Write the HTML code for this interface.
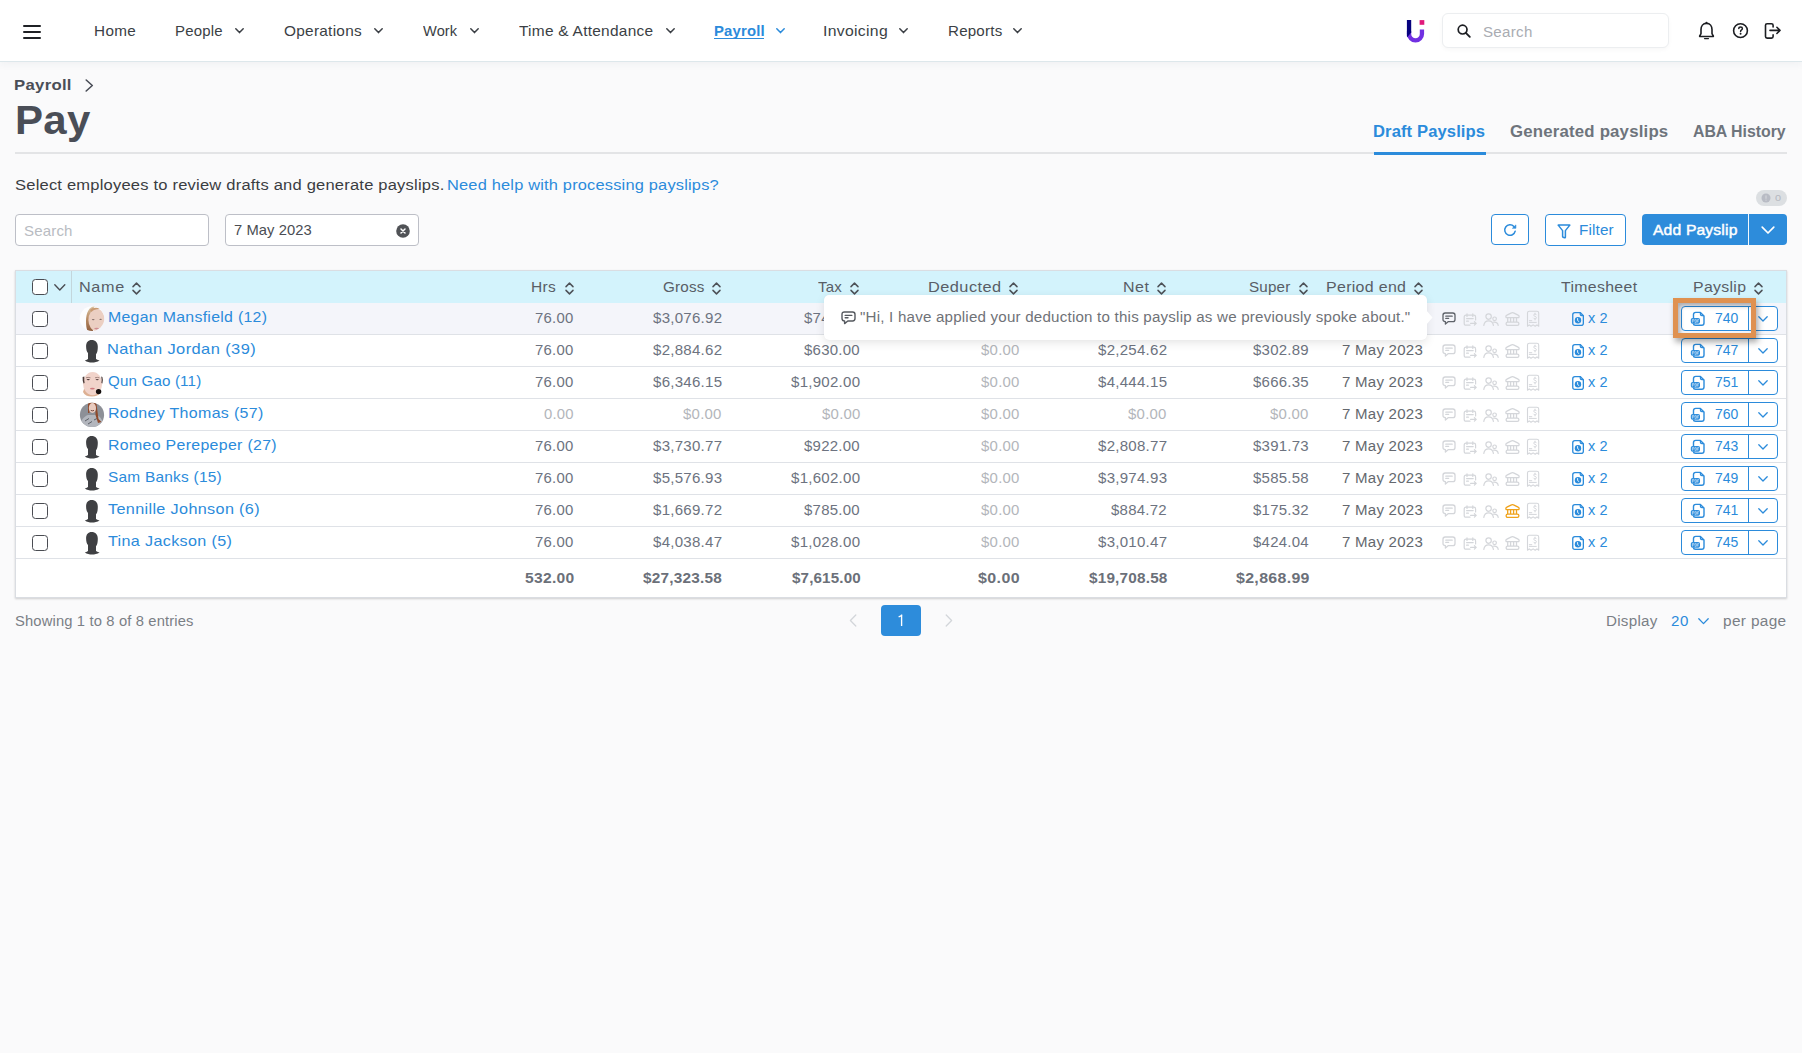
<!DOCTYPE html>
<html><head><meta charset="utf-8"><title>Pay</title>
<style>
*{box-sizing:border-box}
html,body{margin:0;padding:0}
body{width:1802px;height:1053px;overflow:hidden;position:relative;background:#fafafb;font-family:"Liberation Sans", sans-serif}
.t{position:absolute;white-space:nowrap;display:block}
.a{position:absolute}
svg{position:absolute;overflow:visible}
</style></head><body>
<div class="a" style="left:0;top:0;width:1802px;height:62px;background:#fff;border-bottom:1px solid #dde7eb;box-shadow:0 2px 8px rgba(40,60,80,0.05)"></div>
<div class="a" style="left:23px;top:25px;width:18px;height:2.2px;background:#1f2125;border-radius:2px"></div>
<div class="a" style="left:23px;top:31px;width:18px;height:2.2px;background:#1f2125;border-radius:2px"></div>
<div class="a" style="left:23px;top:37px;width:18px;height:2.2px;background:#1f2125;border-radius:2px"></div>
<svg style="left:235.0px;top:27.5px" width="9" height="6" viewBox="0 0 9 6"><path d="M0.8 0.8 L4.5 4.6 L8.2 0.8" fill="none" stroke="#3b3f45" stroke-width="1.5" stroke-linecap="round" stroke-linejoin="round"/></svg>
<svg style="left:374.0px;top:27.5px" width="9" height="6" viewBox="0 0 9 6"><path d="M0.8 0.8 L4.5 4.6 L8.2 0.8" fill="none" stroke="#3b3f45" stroke-width="1.5" stroke-linecap="round" stroke-linejoin="round"/></svg>
<svg style="left:470.0px;top:27.5px" width="9" height="6" viewBox="0 0 9 6"><path d="M0.8 0.8 L4.5 4.6 L8.2 0.8" fill="none" stroke="#3b3f45" stroke-width="1.5" stroke-linecap="round" stroke-linejoin="round"/></svg>
<svg style="left:665.7px;top:27.5px" width="9" height="6" viewBox="0 0 9 6"><path d="M0.8 0.8 L4.5 4.6 L8.2 0.8" fill="none" stroke="#3b3f45" stroke-width="1.5" stroke-linecap="round" stroke-linejoin="round"/></svg>
<div class="a" style="left:714px;top:38px;width:50px;height:1.4px;background:#2b8bdb"></div>
<svg style="left:775.5px;top:27.5px" width="9" height="6" viewBox="0 0 9 6"><path d="M0.8 0.8 L4.5 4.6 L8.2 0.8" fill="none" stroke="#2b8bdb" stroke-width="1.5" stroke-linecap="round" stroke-linejoin="round"/></svg>
<svg style="left:899.0px;top:27.5px" width="9" height="6" viewBox="0 0 9 6"><path d="M0.8 0.8 L4.5 4.6 L8.2 0.8" fill="none" stroke="#3b3f45" stroke-width="1.5" stroke-linecap="round" stroke-linejoin="round"/></svg>
<svg style="left:1013.0px;top:27.5px" width="9" height="6" viewBox="0 0 9 6"><path d="M0.8 0.8 L4.5 4.6 L8.2 0.8" fill="none" stroke="#3b3f45" stroke-width="1.5" stroke-linecap="round" stroke-linejoin="round"/></svg>
<svg style="left:1398px;top:14px" width="34" height="34" viewBox="0 0 34 34">
<path d="M11.05 17 L11.05 19.9 A6.45 6.45 0 0 0 23.95 19.9 L23.95 15.5" fill="none" stroke="#7130e2" stroke-width="4.3"/>
<path d="M8.9 6.1 L13.2 6.1 L13.2 18.6 L9.2 23.2 L8.9 22 Z" fill="#06027e"/>
<rect x="21.6" y="6.1" width="4.7" height="4.7" fill="#e01a7b"/>
</svg>
<div class="a" style="left:1442px;top:13px;width:227px;height:35px;background:#fff;border:1px solid #eceef0;border-radius:6px;box-shadow:0 2px 4px rgba(0,0,0,0.03)"></div>
<svg style="left:1457px;top:24px" width="14" height="14" viewBox="0 0 14 14"><circle cx="5.6" cy="5.6" r="4.4" fill="none" stroke="#1c1e22" stroke-width="1.7"/><path d="M8.8 8.8 L12.8 12.8" stroke="#1c1e22" stroke-width="1.9" stroke-linecap="round"/></svg>
<svg style="left:1692px;top:16px" width="96" height="30" viewBox="0 0 96 30">
<path d="M14.5 7.4 C10.9 7.4 9 10.2 9 13.6 L9 17.6 L7.8 19.8 Q7.3 20.5 8.2 20.5 L20.8 20.5 Q21.7 20.5 21.2 19.8 L20 17.6 L20 13.6 C20 10.2 18.1 7.4 14.5 7.4 Z" fill="none" stroke="#1c1e22" stroke-width="1.6" stroke-linejoin="round"/>
<circle cx="14.5" cy="6.9" r="1.1" fill="#1c1e22"/>
<path d="M12.6 22.6 L16.4 22.6" stroke="#1c1e22" stroke-width="1.4" stroke-linecap="round"/>
<circle cx="48.5" cy="14.65" r="6.9" fill="none" stroke="#1c1e22" stroke-width="1.6"/>
<path d="M46.8 12.6 Q46.8 10.9 48.6 10.9 Q50.4 10.9 50.4 12.5 Q50.4 13.5 49.3 14.1 Q48.6 14.5 48.6 15.6" fill="none" stroke="#1c1e22" stroke-width="1.5" stroke-linecap="round"/>
<circle cx="48.6" cy="17.7" r="0.95" fill="#1c1e22"/>
<path d="M81.1 10.9 L81.1 9.3 Q81.1 7.7 79.5 7.7 L75.1 7.7 Q73.5 7.7 73.5 9.3 L73.5 20.5 Q73.5 22.1 75.1 22.1 L79.5 22.1 Q81.1 22.1 81.1 20.5 L81.1 18.9" fill="none" stroke="#1c1e22" stroke-width="1.6" stroke-linecap="round" stroke-linejoin="round"/>
<path d="M78 14.4 L88 14.4 M84.9 11.3 L88 14.4 L84.9 17.5" fill="none" stroke="#1c1e22" stroke-width="1.6" stroke-linecap="round" stroke-linejoin="round"/>
</svg>
<svg style="left:84.5px;top:78.5px" width="9" height="13" viewBox="0 0 9 13"><path d="M1.2 1 L7.3 6.5 L1.2 12" fill="none" stroke="#4a4e57" stroke-width="1.6" stroke-linecap="round" stroke-linejoin="round"/></svg>
<div class="a" style="left:15px;top:152px;width:1772px;height:2px;background:#e3e4e6"></div>
<div class="a" style="left:1374px;top:151.5px;width:112px;height:3px;background:#2b8bdb"></div>
<div class="a" style="left:1756px;top:190px;width:31px;height:16px;background:#dcdfe2;border-radius:8px"></div>
<svg style="left:1761px;top:193px" width="10" height="10" viewBox="0 0 10 10"><circle cx="5" cy="5" r="4.5" fill="#b8bbc4"/><rect x="4.4" y="2.4" width="1.2" height="3.4" fill="#d2d4d9"/><rect x="4.4" y="6.6" width="1.2" height="1.1" fill="#d2d4d9"/></svg>
<div class="a" style="left:15px;top:214px;width:194px;height:32px;background:#fff;border:1px solid #bdbfc7;border-radius:4px"></div>
<div class="a" style="left:225px;top:214px;width:194px;height:32px;background:#fff;border:1px solid #bdbfc7;border-radius:4px"></div>
<svg style="left:396px;top:224px" width="14" height="14" viewBox="0 0 14 14"><circle cx="7" cy="7" r="6.8" fill="#505256"/><path d="M5 5 L9 9 M9 5 L5 9" stroke="#fff" stroke-width="1.5" stroke-linecap="round"/></svg>
<div class="a" style="left:1491px;top:214px;width:38px;height:31px;background:#fff;border:1px solid #2b8bdb;border-radius:4px"></div>
<svg style="left:1500px;top:220px" width="20" height="20" viewBox="0 0 20 20"><path d="M15.2 11.2 A5.3 5.3 0 1 1 13.9 6.4" fill="none" stroke="#2b8bdb" stroke-width="1.5" stroke-linecap="round"/><path d="M12.4 8.3 L15.9 8.3 L15.9 4.9 Z" fill="#2b8bdb" stroke="#2b8bdb" stroke-width="0.6" stroke-linejoin="round"/></svg>
<div class="a" style="left:1545px;top:214px;width:81px;height:32px;background:#fff;border:1px solid #2b8bdb;border-radius:4px"></div>
<svg style="left:1557px;top:223.5px" width="14" height="15" viewBox="0 0 14 15"><path d="M1.4 1.4 Q0.9 1 1.5 0.9 L12.5 0.9 Q13.1 1 12.6 1.4 L8.4 6.6 L8.4 13 Q8.4 14 7.6 13.8 L6.2 13.2 Q5.6 13 5.6 12.4 L5.6 6.6 Z" fill="none" stroke="#2b8bdb" stroke-width="1.5" stroke-linejoin="round"/></svg>
<div class="a" style="left:1642px;top:214px;width:145px;height:31px;background:#2d8cdb;border-radius:4px"></div>
<div class="a" style="left:1748px;top:214px;width:1px;height:31px;background:#f2f8fd"></div>
<svg style="left:1761px;top:226px" width="14" height="9" viewBox="0 0 14 9"><path d="M1.2 1.2 L7 7 L12.8 1.2" fill="none" stroke="#fff" stroke-width="1.7" stroke-linecap="round" stroke-linejoin="round"/></svg>
<div class="a" style="left:15px;top:270px;width:1772px;height:328px;background:#fff;border:1px solid #dadde2;box-shadow:0 1px 2px rgba(0,0,0,0.18)"></div>
<div class="a" style="left:16px;top:271px;width:1770px;height:32px;background:#d3f3fc"></div>
<div class="a" style="left:71px;top:271px;width:1px;height:32px;background:#c3d6dc"></div>
<div class="a" style="left:16px;top:303px;width:1770px;height:31px;background:#f4f5fa"></div>
<div class="a" style="left:16px;top:334px;width:1770px;height:1px;background:#dfe2e7"></div>
<div class="a" style="left:16px;top:366px;width:1770px;height:1px;background:#dfe2e7"></div>
<div class="a" style="left:16px;top:398px;width:1770px;height:1px;background:#dfe2e7"></div>
<div class="a" style="left:16px;top:430px;width:1770px;height:1px;background:#dfe2e7"></div>
<div class="a" style="left:16px;top:462px;width:1770px;height:1px;background:#dfe2e7"></div>
<div class="a" style="left:16px;top:494px;width:1770px;height:1px;background:#dfe2e7"></div>
<div class="a" style="left:16px;top:526px;width:1770px;height:1px;background:#dfe2e7"></div>
<div class="a" style="left:16px;top:558px;width:1770px;height:1px;background:#dfe2e7"></div>
<div class="a" style="left:32px;top:279px;width:16px;height:16px;background:#fff;border:1.5px solid #4a4c52;border-radius:3.5px"></div>
<svg style="left:54px;top:284px" width="12" height="7" viewBox="0 0 12 7"><path d="M0.8 0.8 L5.8 5.9 L10.8 0.8" fill="none" stroke="#4a4c52" stroke-width="1.4" stroke-linecap="round" stroke-linejoin="round"/></svg>
<svg style="left:132.1px;top:281.5px" width="9" height="13" viewBox="0 0 9 13"><path d="M1 4.6 L4.5 1.1 L8 4.6 M1 8.4 L4.5 11.9 L8 8.4" fill="none" stroke="#4e5258" stroke-width="1.5" stroke-linecap="round" stroke-linejoin="round"/></svg>
<svg style="left:564.6px;top:281.5px" width="9" height="13" viewBox="0 0 9 13"><path d="M1 4.6 L4.5 1.1 L8 4.6 M1 8.4 L4.5 11.9 L8 8.4" fill="none" stroke="#4e5258" stroke-width="1.5" stroke-linecap="round" stroke-linejoin="round"/></svg>
<svg style="left:712.2px;top:281.5px" width="9" height="13" viewBox="0 0 9 13"><path d="M1 4.6 L4.5 1.1 L8 4.6 M1 8.4 L4.5 11.9 L8 8.4" fill="none" stroke="#4e5258" stroke-width="1.5" stroke-linecap="round" stroke-linejoin="round"/></svg>
<svg style="left:850.3px;top:281.5px" width="9" height="13" viewBox="0 0 9 13"><path d="M1 4.6 L4.5 1.1 L8 4.6 M1 8.4 L4.5 11.9 L8 8.4" fill="none" stroke="#4e5258" stroke-width="1.5" stroke-linecap="round" stroke-linejoin="round"/></svg>
<svg style="left:1009.0px;top:281.5px" width="9" height="13" viewBox="0 0 9 13"><path d="M1 4.6 L4.5 1.1 L8 4.6 M1 8.4 L4.5 11.9 L8 8.4" fill="none" stroke="#4e5258" stroke-width="1.5" stroke-linecap="round" stroke-linejoin="round"/></svg>
<svg style="left:1157.3px;top:281.5px" width="9" height="13" viewBox="0 0 9 13"><path d="M1 4.6 L4.5 1.1 L8 4.6 M1 8.4 L4.5 11.9 L8 8.4" fill="none" stroke="#4e5258" stroke-width="1.5" stroke-linecap="round" stroke-linejoin="round"/></svg>
<svg style="left:1299.1px;top:281.5px" width="9" height="13" viewBox="0 0 9 13"><path d="M1 4.6 L4.5 1.1 L8 4.6 M1 8.4 L4.5 11.9 L8 8.4" fill="none" stroke="#4e5258" stroke-width="1.5" stroke-linecap="round" stroke-linejoin="round"/></svg>
<svg style="left:1414.4px;top:281.5px" width="9" height="13" viewBox="0 0 9 13"><path d="M1 4.6 L4.5 1.1 L8 4.6 M1 8.4 L4.5 11.9 L8 8.4" fill="none" stroke="#4e5258" stroke-width="1.5" stroke-linecap="round" stroke-linejoin="round"/></svg>
<svg style="left:1754.3px;top:281.5px" width="9" height="13" viewBox="0 0 9 13"><path d="M1 4.6 L4.5 1.1 L8 4.6 M1 8.4 L4.5 11.9 L8 8.4" fill="none" stroke="#4e5258" stroke-width="1.5" stroke-linecap="round" stroke-linejoin="round"/></svg>
<div class="a" style="left:32px;top:311px;width:16px;height:16px;background:#fff;border:1.5px solid #4a4c52;border-radius:3.5px"></div>
<svg style="left:76px;top:303.0px" width="32" height="32" viewBox="0 0 32 32"><defs><clipPath id="cm"><circle cx="16" cy="15.6" r="12.3"/></clipPath>
<linearGradient id="gm" x1="0" y1="0" x2="0" y2="1"><stop offset="0" stop-color="#dcc6a6"/><stop offset="0.5" stop-color="#b88a62"/><stop offset="1" stop-color="#8e5e3e"/></linearGradient></defs>
<g clip-path="url(#cm)"><rect width="32" height="32" fill="#fdfdfe"/>
<path d="M19 3 C13 3.5 10 10 10 18 C10 23 10.5 26 12 29 L17 29 L17 6 Z" fill="url(#gm)"/>
<ellipse cx="20.6" cy="17" rx="8.2" ry="11.2" fill="#ebcfc2"/>
<path d="M14 7 C16 4.5 21 4 24 6 C21 5.8 17.5 6.5 15.5 9 Z" fill="#c99a72"/>
<ellipse cx="17.2" cy="16.6" rx="1.4" ry="0.7" fill="#85706a"/><ellipse cx="24.6" cy="16.3" rx="1.3" ry="0.6" fill="#85706a"/>
<ellipse cx="20.6" cy="25.6" rx="2.4" ry="0.8" fill="#cf8e92"/></g></svg>
<svg style="left:1442.0px;top:312.0px" width="14" height="13" viewBox="0 0 14 13"><path d="M3.2 1 H10.8 Q13 1 13 3.2 V7.4 Q13 9.6 10.8 9.6 H6.4 L3.4 12 V9.6 Q1 9.6 1 7.4 V3.2 Q1 1 3.2 1 Z" fill="none" stroke="#5f636a" stroke-width="1.3" stroke-linejoin="round"/><path d="M3.8 4.2 H10.2 M3.8 6.4 H6.6" stroke="#5f636a" stroke-width="1.3" stroke-linecap="round"/></svg>
<svg style="left:1463.0px;top:312.5px" width="14" height="14" viewBox="0 0 14 14"><path d="M7 12.2 H3 Q1.2 12.2 1.2 10.4 V4 Q1.2 2.2 3 2.2 H10.8 Q12.6 2.2 12.6 4 V7" fill="none" stroke="#d4d6da" stroke-width="1.2" stroke-linecap="round"/><path d="M4 0.8 V3.4 M9.8 0.8 V3.4 M3.6 5.6 H10.2 M3.6 8.2 H5.4" stroke="#d4d6da" stroke-width="1.2" stroke-linecap="round"/><path d="M7.6 10.4 H13.2 M11.4 8.6 L13.2 10.4 L11.4 12.2" fill="none" stroke="#d4d6da" stroke-width="1.2" stroke-linecap="round" stroke-linejoin="round"/></svg>
<svg style="left:1483.0px;top:313.2px" width="16" height="13" viewBox="0 0 16 13"><circle cx="5.6" cy="3.6" r="2.7" fill="none" stroke="#d4d6da" stroke-width="1.2"/><path d="M0.8 12.4 Q1.4 7.8 5.6 7.8 Q9.8 7.8 10.4 12.4" fill="none" stroke="#d4d6da" stroke-width="1.2" stroke-linecap="round"/><circle cx="11.6" cy="5.8" r="1.8" fill="none" stroke="#d4d6da" stroke-width="1.2"/><path d="M10.6 9.2 Q14.6 8.8 15.2 12.4" fill="none" stroke="#d4d6da" stroke-width="1.2" stroke-linecap="round"/></svg>
<svg style="left:1505.0px;top:311.0px" width="15" height="16" viewBox="0 0 15 16"><path d="M1.6 6.6 C0.7 6.6 0.5 4.7 1.9 4.2 L6.5 1.9 Q7.5 1.3 8.5 1.9 L13.1 4.2 C14.5 4.7 14.3 6.6 13.4 6.6 Z" fill="none" stroke="#d4d6da" stroke-width="1.3" stroke-linejoin="round"/><path d="M2.7 7 V11 M5.6 7 V11 M8.6 7 V11 M11.5 7 V11" stroke="#d4d6da" stroke-width="1.3"/><rect x="1.1" y="11.1" width="12.8" height="3.3" rx="1.6" fill="none" stroke="#d4d6da" stroke-width="1.3"/></svg>
<svg style="left:1526.0px;top:310.0px" width="14" height="18" viewBox="0 0 14 18"><path d="M1.5 16.2 V3 Q1.5 1.2 3.3 1.2 H10.9 Q12.7 1.2 12.7 3 V16.2 L11 14.9 L9.2 16.3 L7.1 14.9 L5 16.3 L3.2 14.9 Z" fill="none" stroke="#d4d6da" stroke-width="1.1" stroke-linejoin="round"/><path d="M10.4 4.8 Q9.9 4 8.9 4 Q7.7 4 7.7 5.1 Q7.7 6 8.9 6.3 Q10.4 6.6 10.4 7.7 Q10.4 8.9 9.1 8.9 Q8 8.9 7.5 8.1 M9 3.1 V4 M9 8.9 V9.9" fill="none" stroke="#d4d6da" stroke-width="0.9" stroke-linecap="round"/><path d="M3.3 10.7 H5.8 M3.3 12.4 H10.3" stroke="#d4d6da" stroke-width="1" stroke-linecap="round"/></svg>
<svg style="left:1568px;top:303.0px" width="22" height="26" viewBox="0 0 22 26"><path d="M6.9 9.55 H12.2 L15.35 12.7 V20.2 Q15.35 22.35 13.2 22.35 H6.9 Q4.75 22.35 4.75 20.2 V11.7 Q4.75 9.55 6.9 9.55 Z" fill="none" stroke="#2b8bdb" stroke-width="1.3" stroke-linejoin="round"/><path d="M12.2 9.55 V11.2 Q12.2 12.7 13.7 12.7 H15.35" fill="none" stroke="#2b8bdb" stroke-width="1.2"/><circle cx="10" cy="17.2" r="3.2" fill="#2b8bdb"/><path d="M9.6 15.5 V17.5 L10.9 18.5" stroke="#fff" stroke-width="0.9" fill="none" stroke-linecap="round"/></svg>
<div class="a" style="left:1681px;top:306.3px;width:97px;height:24.5px;background:#fff;border:1.2px solid #2b8bdb;border-radius:4px"></div>
<div class="a" style="left:1748px;top:306.3px;width:1.2px;height:24.5px;background:#2b8bdb"></div>
<svg style="left:1688px;top:308.0px" width="20" height="20" viewBox="0 0 20 20"><path d="M5.5 10.5 V6.6 Q5.5 4.4 7.7 4.4 H12.4 L16 7.9 V15 Q16 17.2 13.8 17.2 H7.7 Q5.5 17.2 5.5 15.4" fill="none" stroke="#2b8bdb" stroke-width="1.4" stroke-linejoin="round"/><path d="M12.4 4.4 V6.3 Q12.4 7.7 13.8 7.7 H16" fill="none" stroke="#2b8bdb" stroke-width="1.2"/><rect x="2.8" y="10" width="9.2" height="5.8" rx="1.7" fill="#2b8bdb"/><path d="M4.4 14.6 V11.4 H5.4 Q6.2 11.4 6.2 12.2 Q6.2 13 5.4 13 H4.4 M7.1 11.4 V14.6 H7.7 Q8.8 14.6 8.8 13 Q8.8 11.4 7.7 11.4 Z M9.7 14.6 V11.4 H11 M9.7 13 H10.7" fill="none" stroke="#fff" stroke-width="0.6" opacity="0.85"/></svg>
<svg style="left:1758px;top:316.2px" width="10" height="6" viewBox="0 0 10 6"><path d="M0.8 0.8 L5 5 L9.2 0.8" fill="none" stroke="#2b8bdb" stroke-width="1.3" stroke-linecap="round" stroke-linejoin="round"/></svg>
<div class="a" style="left:32px;top:343px;width:16px;height:16px;background:#fff;border:1.5px solid #4a4c52;border-radius:3.5px"></div>
<svg style="left:76px;top:336.0px" width="32" height="30" viewBox="0 0 32 30"><path d="M15.6 4 C12.2 4 10.1 6.4 10.1 10.4 C10.1 13.4 10.8 15.6 12 17 L12 23 C10.8 23.8 9.8 24.2 8.8 24.6 C11 26 13.4 26.6 16 26.6 C18.6 26.6 21.2 26 23.6 24.6 C22.6 24.2 21.2 23.8 20 23 L20 18.2 C21 17.4 21.8 15.4 21.8 10.6 C21.8 6.4 19.4 4 15.6 4 Z" fill="#3f4043"/></svg>
<svg style="left:1442.0px;top:344.0px" width="14" height="13" viewBox="0 0 14 13"><path d="M3.2 1 H10.8 Q13 1 13 3.2 V7.4 Q13 9.6 10.8 9.6 H6.4 L3.4 12 V9.6 Q1 9.6 1 7.4 V3.2 Q1 1 3.2 1 Z" fill="none" stroke="#d4d6da" stroke-width="1.3" stroke-linejoin="round"/><path d="M3.8 4.2 H10.2 M3.8 6.4 H6.6" stroke="#d4d6da" stroke-width="1.3" stroke-linecap="round"/></svg>
<svg style="left:1463.0px;top:344.5px" width="14" height="14" viewBox="0 0 14 14"><path d="M7 12.2 H3 Q1.2 12.2 1.2 10.4 V4 Q1.2 2.2 3 2.2 H10.8 Q12.6 2.2 12.6 4 V7" fill="none" stroke="#d4d6da" stroke-width="1.2" stroke-linecap="round"/><path d="M4 0.8 V3.4 M9.8 0.8 V3.4 M3.6 5.6 H10.2 M3.6 8.2 H5.4" stroke="#d4d6da" stroke-width="1.2" stroke-linecap="round"/><path d="M7.6 10.4 H13.2 M11.4 8.6 L13.2 10.4 L11.4 12.2" fill="none" stroke="#d4d6da" stroke-width="1.2" stroke-linecap="round" stroke-linejoin="round"/></svg>
<svg style="left:1483.0px;top:345.2px" width="16" height="13" viewBox="0 0 16 13"><circle cx="5.6" cy="3.6" r="2.7" fill="none" stroke="#d4d6da" stroke-width="1.2"/><path d="M0.8 12.4 Q1.4 7.8 5.6 7.8 Q9.8 7.8 10.4 12.4" fill="none" stroke="#d4d6da" stroke-width="1.2" stroke-linecap="round"/><circle cx="11.6" cy="5.8" r="1.8" fill="none" stroke="#d4d6da" stroke-width="1.2"/><path d="M10.6 9.2 Q14.6 8.8 15.2 12.4" fill="none" stroke="#d4d6da" stroke-width="1.2" stroke-linecap="round"/></svg>
<svg style="left:1505.0px;top:343.0px" width="15" height="16" viewBox="0 0 15 16"><path d="M1.6 6.6 C0.7 6.6 0.5 4.7 1.9 4.2 L6.5 1.9 Q7.5 1.3 8.5 1.9 L13.1 4.2 C14.5 4.7 14.3 6.6 13.4 6.6 Z" fill="none" stroke="#d4d6da" stroke-width="1.3" stroke-linejoin="round"/><path d="M2.7 7 V11 M5.6 7 V11 M8.6 7 V11 M11.5 7 V11" stroke="#d4d6da" stroke-width="1.3"/><rect x="1.1" y="11.1" width="12.8" height="3.3" rx="1.6" fill="none" stroke="#d4d6da" stroke-width="1.3"/></svg>
<svg style="left:1526.0px;top:342.0px" width="14" height="18" viewBox="0 0 14 18"><path d="M1.5 16.2 V3 Q1.5 1.2 3.3 1.2 H10.9 Q12.7 1.2 12.7 3 V16.2 L11 14.9 L9.2 16.3 L7.1 14.9 L5 16.3 L3.2 14.9 Z" fill="none" stroke="#d4d6da" stroke-width="1.1" stroke-linejoin="round"/><path d="M10.4 4.8 Q9.9 4 8.9 4 Q7.7 4 7.7 5.1 Q7.7 6 8.9 6.3 Q10.4 6.6 10.4 7.7 Q10.4 8.9 9.1 8.9 Q8 8.9 7.5 8.1 M9 3.1 V4 M9 8.9 V9.9" fill="none" stroke="#d4d6da" stroke-width="0.9" stroke-linecap="round"/><path d="M3.3 10.7 H5.8 M3.3 12.4 H10.3" stroke="#d4d6da" stroke-width="1" stroke-linecap="round"/></svg>
<svg style="left:1568px;top:335.0px" width="22" height="26" viewBox="0 0 22 26"><path d="M6.9 9.55 H12.2 L15.35 12.7 V20.2 Q15.35 22.35 13.2 22.35 H6.9 Q4.75 22.35 4.75 20.2 V11.7 Q4.75 9.55 6.9 9.55 Z" fill="none" stroke="#2b8bdb" stroke-width="1.3" stroke-linejoin="round"/><path d="M12.2 9.55 V11.2 Q12.2 12.7 13.7 12.7 H15.35" fill="none" stroke="#2b8bdb" stroke-width="1.2"/><circle cx="10" cy="17.2" r="3.2" fill="#2b8bdb"/><path d="M9.6 15.5 V17.5 L10.9 18.5" stroke="#fff" stroke-width="0.9" fill="none" stroke-linecap="round"/></svg>
<div class="a" style="left:1681px;top:338.3px;width:97px;height:24.5px;background:#fff;border:1.2px solid #2b8bdb;border-radius:4px"></div>
<div class="a" style="left:1748px;top:338.3px;width:1.2px;height:24.5px;background:#2b8bdb"></div>
<svg style="left:1688px;top:340.0px" width="20" height="20" viewBox="0 0 20 20"><path d="M5.5 10.5 V6.6 Q5.5 4.4 7.7 4.4 H12.4 L16 7.9 V15 Q16 17.2 13.8 17.2 H7.7 Q5.5 17.2 5.5 15.4" fill="none" stroke="#2b8bdb" stroke-width="1.4" stroke-linejoin="round"/><path d="M12.4 4.4 V6.3 Q12.4 7.7 13.8 7.7 H16" fill="none" stroke="#2b8bdb" stroke-width="1.2"/><rect x="2.8" y="10" width="9.2" height="5.8" rx="1.7" fill="#2b8bdb"/><path d="M4.4 14.6 V11.4 H5.4 Q6.2 11.4 6.2 12.2 Q6.2 13 5.4 13 H4.4 M7.1 11.4 V14.6 H7.7 Q8.8 14.6 8.8 13 Q8.8 11.4 7.7 11.4 Z M9.7 14.6 V11.4 H11 M9.7 13 H10.7" fill="none" stroke="#fff" stroke-width="0.6" opacity="0.85"/></svg>
<svg style="left:1758px;top:348.2px" width="10" height="6" viewBox="0 0 10 6"><path d="M0.8 0.8 L5 5 L9.2 0.8" fill="none" stroke="#2b8bdb" stroke-width="1.3" stroke-linecap="round" stroke-linejoin="round"/></svg>
<div class="a" style="left:32px;top:375px;width:16px;height:16px;background:#fff;border:1.5px solid #4a4c52;border-radius:3.5px"></div>
<svg style="left:76px;top:368.0px" width="32" height="32" viewBox="0 0 32 32">
<path d="M7 24 Q9 28.5 16 28.5 Q22 28.5 25 24 L24 21 L8 21 Z" fill="#ddb093"/>
<ellipse cx="16.6" cy="15.6" rx="9.6" ry="11.6" fill="#f1d3ca"/>
<path d="M6.6 9 Q6.4 13 7.6 15.6 L8.6 15 Q8 12 8.4 8.6 Z M25.2 8.6 Q26 12 25.4 15 L26.4 15.6 Q27.4 12 26.4 9 Z" fill="#4a3a38"/>
<path d="M10 9.8 Q12 9 14.5 9.8 M19 9.8 Q21.5 9 23.5 9.8" stroke="#9b7d76" stroke-width="0.9" fill="none"/>
<ellipse cx="12.2" cy="11.6" rx="1.6" ry="0.7" fill="#4a3434"/><ellipse cx="21.2" cy="11.6" rx="1.6" ry="0.7" fill="#5a4444"/>
<ellipse cx="16.4" cy="20.6" rx="2.4" ry="0.9" fill="#d07a7e"/>
<circle cx="22.6" cy="23.6" r="2.7" fill="#140e0e"/></svg>
<svg style="left:1442.0px;top:376.0px" width="14" height="13" viewBox="0 0 14 13"><path d="M3.2 1 H10.8 Q13 1 13 3.2 V7.4 Q13 9.6 10.8 9.6 H6.4 L3.4 12 V9.6 Q1 9.6 1 7.4 V3.2 Q1 1 3.2 1 Z" fill="none" stroke="#d4d6da" stroke-width="1.3" stroke-linejoin="round"/><path d="M3.8 4.2 H10.2 M3.8 6.4 H6.6" stroke="#d4d6da" stroke-width="1.3" stroke-linecap="round"/></svg>
<svg style="left:1463.0px;top:376.5px" width="14" height="14" viewBox="0 0 14 14"><path d="M7 12.2 H3 Q1.2 12.2 1.2 10.4 V4 Q1.2 2.2 3 2.2 H10.8 Q12.6 2.2 12.6 4 V7" fill="none" stroke="#d4d6da" stroke-width="1.2" stroke-linecap="round"/><path d="M4 0.8 V3.4 M9.8 0.8 V3.4 M3.6 5.6 H10.2 M3.6 8.2 H5.4" stroke="#d4d6da" stroke-width="1.2" stroke-linecap="round"/><path d="M7.6 10.4 H13.2 M11.4 8.6 L13.2 10.4 L11.4 12.2" fill="none" stroke="#d4d6da" stroke-width="1.2" stroke-linecap="round" stroke-linejoin="round"/></svg>
<svg style="left:1483.0px;top:377.2px" width="16" height="13" viewBox="0 0 16 13"><circle cx="5.6" cy="3.6" r="2.7" fill="none" stroke="#d4d6da" stroke-width="1.2"/><path d="M0.8 12.4 Q1.4 7.8 5.6 7.8 Q9.8 7.8 10.4 12.4" fill="none" stroke="#d4d6da" stroke-width="1.2" stroke-linecap="round"/><circle cx="11.6" cy="5.8" r="1.8" fill="none" stroke="#d4d6da" stroke-width="1.2"/><path d="M10.6 9.2 Q14.6 8.8 15.2 12.4" fill="none" stroke="#d4d6da" stroke-width="1.2" stroke-linecap="round"/></svg>
<svg style="left:1505.0px;top:375.0px" width="15" height="16" viewBox="0 0 15 16"><path d="M1.6 6.6 C0.7 6.6 0.5 4.7 1.9 4.2 L6.5 1.9 Q7.5 1.3 8.5 1.9 L13.1 4.2 C14.5 4.7 14.3 6.6 13.4 6.6 Z" fill="none" stroke="#d4d6da" stroke-width="1.3" stroke-linejoin="round"/><path d="M2.7 7 V11 M5.6 7 V11 M8.6 7 V11 M11.5 7 V11" stroke="#d4d6da" stroke-width="1.3"/><rect x="1.1" y="11.1" width="12.8" height="3.3" rx="1.6" fill="none" stroke="#d4d6da" stroke-width="1.3"/></svg>
<svg style="left:1526.0px;top:374.0px" width="14" height="18" viewBox="0 0 14 18"><path d="M1.5 16.2 V3 Q1.5 1.2 3.3 1.2 H10.9 Q12.7 1.2 12.7 3 V16.2 L11 14.9 L9.2 16.3 L7.1 14.9 L5 16.3 L3.2 14.9 Z" fill="none" stroke="#d4d6da" stroke-width="1.1" stroke-linejoin="round"/><path d="M10.4 4.8 Q9.9 4 8.9 4 Q7.7 4 7.7 5.1 Q7.7 6 8.9 6.3 Q10.4 6.6 10.4 7.7 Q10.4 8.9 9.1 8.9 Q8 8.9 7.5 8.1 M9 3.1 V4 M9 8.9 V9.9" fill="none" stroke="#d4d6da" stroke-width="0.9" stroke-linecap="round"/><path d="M3.3 10.7 H5.8 M3.3 12.4 H10.3" stroke="#d4d6da" stroke-width="1" stroke-linecap="round"/></svg>
<svg style="left:1568px;top:367.0px" width="22" height="26" viewBox="0 0 22 26"><path d="M6.9 9.55 H12.2 L15.35 12.7 V20.2 Q15.35 22.35 13.2 22.35 H6.9 Q4.75 22.35 4.75 20.2 V11.7 Q4.75 9.55 6.9 9.55 Z" fill="none" stroke="#2b8bdb" stroke-width="1.3" stroke-linejoin="round"/><path d="M12.2 9.55 V11.2 Q12.2 12.7 13.7 12.7 H15.35" fill="none" stroke="#2b8bdb" stroke-width="1.2"/><circle cx="10" cy="17.2" r="3.2" fill="#2b8bdb"/><path d="M9.6 15.5 V17.5 L10.9 18.5" stroke="#fff" stroke-width="0.9" fill="none" stroke-linecap="round"/></svg>
<div class="a" style="left:1681px;top:370.3px;width:97px;height:24.5px;background:#fff;border:1.2px solid #2b8bdb;border-radius:4px"></div>
<div class="a" style="left:1748px;top:370.3px;width:1.2px;height:24.5px;background:#2b8bdb"></div>
<svg style="left:1688px;top:372.0px" width="20" height="20" viewBox="0 0 20 20"><path d="M5.5 10.5 V6.6 Q5.5 4.4 7.7 4.4 H12.4 L16 7.9 V15 Q16 17.2 13.8 17.2 H7.7 Q5.5 17.2 5.5 15.4" fill="none" stroke="#2b8bdb" stroke-width="1.4" stroke-linejoin="round"/><path d="M12.4 4.4 V6.3 Q12.4 7.7 13.8 7.7 H16" fill="none" stroke="#2b8bdb" stroke-width="1.2"/><rect x="2.8" y="10" width="9.2" height="5.8" rx="1.7" fill="#2b8bdb"/><path d="M4.4 14.6 V11.4 H5.4 Q6.2 11.4 6.2 12.2 Q6.2 13 5.4 13 H4.4 M7.1 11.4 V14.6 H7.7 Q8.8 14.6 8.8 13 Q8.8 11.4 7.7 11.4 Z M9.7 14.6 V11.4 H11 M9.7 13 H10.7" fill="none" stroke="#fff" stroke-width="0.6" opacity="0.85"/></svg>
<svg style="left:1758px;top:380.2px" width="10" height="6" viewBox="0 0 10 6"><path d="M0.8 0.8 L5 5 L9.2 0.8" fill="none" stroke="#2b8bdb" stroke-width="1.3" stroke-linecap="round" stroke-linejoin="round"/></svg>
<div class="a" style="left:32px;top:407px;width:16px;height:16px;background:#fff;border:1.5px solid #4a4c52;border-radius:3.5px"></div>
<svg style="left:76px;top:399.0px" width="32" height="32" viewBox="0 0 32 32"><defs><clipPath id="cr"><circle cx="16" cy="15.9" r="12.1"/></clipPath></defs><g clip-path="url(#cr)">
<rect width="32" height="32" fill="#8d9097"/>
<path d="M3 30 C4 21 8 17.5 12 16 L20 16 C24 17 27 20 28 30 Z" fill="#b3b6bd"/>
<path d="M9 22 L13 19.5 M12 25 L16 22.5 M18 21 L22 19" stroke="#5d6068" stroke-width="1" />
<path d="M12 5 C12 2.5 20 2.5 20.5 5 L22.5 20 L25.5 23 L22 24 L19.5 16 L19.5 9 L13.5 9 L13.5 14 L12 14 Z" fill="#8f4a2c"/>
<ellipse cx="16.4" cy="9" rx="3.6" ry="5" fill="#e9cbbf"/>
<path d="M14.8 11.4 Q16.4 12.2 18 11.4" stroke="#6a3a32" stroke-width="0.9" fill="none"/>
</g></svg>
<svg style="left:1442.0px;top:408.0px" width="14" height="13" viewBox="0 0 14 13"><path d="M3.2 1 H10.8 Q13 1 13 3.2 V7.4 Q13 9.6 10.8 9.6 H6.4 L3.4 12 V9.6 Q1 9.6 1 7.4 V3.2 Q1 1 3.2 1 Z" fill="none" stroke="#d4d6da" stroke-width="1.3" stroke-linejoin="round"/><path d="M3.8 4.2 H10.2 M3.8 6.4 H6.6" stroke="#d4d6da" stroke-width="1.3" stroke-linecap="round"/></svg>
<svg style="left:1463.0px;top:408.5px" width="14" height="14" viewBox="0 0 14 14"><path d="M7 12.2 H3 Q1.2 12.2 1.2 10.4 V4 Q1.2 2.2 3 2.2 H10.8 Q12.6 2.2 12.6 4 V7" fill="none" stroke="#d4d6da" stroke-width="1.2" stroke-linecap="round"/><path d="M4 0.8 V3.4 M9.8 0.8 V3.4 M3.6 5.6 H10.2 M3.6 8.2 H5.4" stroke="#d4d6da" stroke-width="1.2" stroke-linecap="round"/><path d="M7.6 10.4 H13.2 M11.4 8.6 L13.2 10.4 L11.4 12.2" fill="none" stroke="#d4d6da" stroke-width="1.2" stroke-linecap="round" stroke-linejoin="round"/></svg>
<svg style="left:1483.0px;top:409.2px" width="16" height="13" viewBox="0 0 16 13"><circle cx="5.6" cy="3.6" r="2.7" fill="none" stroke="#d4d6da" stroke-width="1.2"/><path d="M0.8 12.4 Q1.4 7.8 5.6 7.8 Q9.8 7.8 10.4 12.4" fill="none" stroke="#d4d6da" stroke-width="1.2" stroke-linecap="round"/><circle cx="11.6" cy="5.8" r="1.8" fill="none" stroke="#d4d6da" stroke-width="1.2"/><path d="M10.6 9.2 Q14.6 8.8 15.2 12.4" fill="none" stroke="#d4d6da" stroke-width="1.2" stroke-linecap="round"/></svg>
<svg style="left:1505.0px;top:407.0px" width="15" height="16" viewBox="0 0 15 16"><path d="M1.6 6.6 C0.7 6.6 0.5 4.7 1.9 4.2 L6.5 1.9 Q7.5 1.3 8.5 1.9 L13.1 4.2 C14.5 4.7 14.3 6.6 13.4 6.6 Z" fill="none" stroke="#d4d6da" stroke-width="1.3" stroke-linejoin="round"/><path d="M2.7 7 V11 M5.6 7 V11 M8.6 7 V11 M11.5 7 V11" stroke="#d4d6da" stroke-width="1.3"/><rect x="1.1" y="11.1" width="12.8" height="3.3" rx="1.6" fill="none" stroke="#d4d6da" stroke-width="1.3"/></svg>
<svg style="left:1526.0px;top:406.0px" width="14" height="18" viewBox="0 0 14 18"><path d="M1.5 16.2 V3 Q1.5 1.2 3.3 1.2 H10.9 Q12.7 1.2 12.7 3 V16.2 L11 14.9 L9.2 16.3 L7.1 14.9 L5 16.3 L3.2 14.9 Z" fill="none" stroke="#d4d6da" stroke-width="1.1" stroke-linejoin="round"/><path d="M10.4 4.8 Q9.9 4 8.9 4 Q7.7 4 7.7 5.1 Q7.7 6 8.9 6.3 Q10.4 6.6 10.4 7.7 Q10.4 8.9 9.1 8.9 Q8 8.9 7.5 8.1 M9 3.1 V4 M9 8.9 V9.9" fill="none" stroke="#d4d6da" stroke-width="0.9" stroke-linecap="round"/><path d="M3.3 10.7 H5.8 M3.3 12.4 H10.3" stroke="#d4d6da" stroke-width="1" stroke-linecap="round"/></svg>
<div class="a" style="left:1681px;top:402.3px;width:97px;height:24.5px;background:#fff;border:1.2px solid #2b8bdb;border-radius:4px"></div>
<div class="a" style="left:1748px;top:402.3px;width:1.2px;height:24.5px;background:#2b8bdb"></div>
<svg style="left:1688px;top:404.0px" width="20" height="20" viewBox="0 0 20 20"><path d="M5.5 10.5 V6.6 Q5.5 4.4 7.7 4.4 H12.4 L16 7.9 V15 Q16 17.2 13.8 17.2 H7.7 Q5.5 17.2 5.5 15.4" fill="none" stroke="#2b8bdb" stroke-width="1.4" stroke-linejoin="round"/><path d="M12.4 4.4 V6.3 Q12.4 7.7 13.8 7.7 H16" fill="none" stroke="#2b8bdb" stroke-width="1.2"/><rect x="2.8" y="10" width="9.2" height="5.8" rx="1.7" fill="#2b8bdb"/><path d="M4.4 14.6 V11.4 H5.4 Q6.2 11.4 6.2 12.2 Q6.2 13 5.4 13 H4.4 M7.1 11.4 V14.6 H7.7 Q8.8 14.6 8.8 13 Q8.8 11.4 7.7 11.4 Z M9.7 14.6 V11.4 H11 M9.7 13 H10.7" fill="none" stroke="#fff" stroke-width="0.6" opacity="0.85"/></svg>
<svg style="left:1758px;top:412.2px" width="10" height="6" viewBox="0 0 10 6"><path d="M0.8 0.8 L5 5 L9.2 0.8" fill="none" stroke="#2b8bdb" stroke-width="1.3" stroke-linecap="round" stroke-linejoin="round"/></svg>
<div class="a" style="left:32px;top:439px;width:16px;height:16px;background:#fff;border:1.5px solid #4a4c52;border-radius:3.5px"></div>
<svg style="left:76px;top:432.0px" width="32" height="30" viewBox="0 0 32 30"><path d="M15.6 4 C12.2 4 10.1 6.4 10.1 10.4 C10.1 13.4 10.8 15.6 12 17 L12 23 C10.8 23.8 9.8 24.2 8.8 24.6 C11 26 13.4 26.6 16 26.6 C18.6 26.6 21.2 26 23.6 24.6 C22.6 24.2 21.2 23.8 20 23 L20 18.2 C21 17.4 21.8 15.4 21.8 10.6 C21.8 6.4 19.4 4 15.6 4 Z" fill="#3f4043"/></svg>
<svg style="left:1442.0px;top:440.0px" width="14" height="13" viewBox="0 0 14 13"><path d="M3.2 1 H10.8 Q13 1 13 3.2 V7.4 Q13 9.6 10.8 9.6 H6.4 L3.4 12 V9.6 Q1 9.6 1 7.4 V3.2 Q1 1 3.2 1 Z" fill="none" stroke="#d4d6da" stroke-width="1.3" stroke-linejoin="round"/><path d="M3.8 4.2 H10.2 M3.8 6.4 H6.6" stroke="#d4d6da" stroke-width="1.3" stroke-linecap="round"/></svg>
<svg style="left:1463.0px;top:440.5px" width="14" height="14" viewBox="0 0 14 14"><path d="M7 12.2 H3 Q1.2 12.2 1.2 10.4 V4 Q1.2 2.2 3 2.2 H10.8 Q12.6 2.2 12.6 4 V7" fill="none" stroke="#d4d6da" stroke-width="1.2" stroke-linecap="round"/><path d="M4 0.8 V3.4 M9.8 0.8 V3.4 M3.6 5.6 H10.2 M3.6 8.2 H5.4" stroke="#d4d6da" stroke-width="1.2" stroke-linecap="round"/><path d="M7.6 10.4 H13.2 M11.4 8.6 L13.2 10.4 L11.4 12.2" fill="none" stroke="#d4d6da" stroke-width="1.2" stroke-linecap="round" stroke-linejoin="round"/></svg>
<svg style="left:1483.0px;top:441.2px" width="16" height="13" viewBox="0 0 16 13"><circle cx="5.6" cy="3.6" r="2.7" fill="none" stroke="#d4d6da" stroke-width="1.2"/><path d="M0.8 12.4 Q1.4 7.8 5.6 7.8 Q9.8 7.8 10.4 12.4" fill="none" stroke="#d4d6da" stroke-width="1.2" stroke-linecap="round"/><circle cx="11.6" cy="5.8" r="1.8" fill="none" stroke="#d4d6da" stroke-width="1.2"/><path d="M10.6 9.2 Q14.6 8.8 15.2 12.4" fill="none" stroke="#d4d6da" stroke-width="1.2" stroke-linecap="round"/></svg>
<svg style="left:1505.0px;top:439.0px" width="15" height="16" viewBox="0 0 15 16"><path d="M1.6 6.6 C0.7 6.6 0.5 4.7 1.9 4.2 L6.5 1.9 Q7.5 1.3 8.5 1.9 L13.1 4.2 C14.5 4.7 14.3 6.6 13.4 6.6 Z" fill="none" stroke="#d4d6da" stroke-width="1.3" stroke-linejoin="round"/><path d="M2.7 7 V11 M5.6 7 V11 M8.6 7 V11 M11.5 7 V11" stroke="#d4d6da" stroke-width="1.3"/><rect x="1.1" y="11.1" width="12.8" height="3.3" rx="1.6" fill="none" stroke="#d4d6da" stroke-width="1.3"/></svg>
<svg style="left:1526.0px;top:438.0px" width="14" height="18" viewBox="0 0 14 18"><path d="M1.5 16.2 V3 Q1.5 1.2 3.3 1.2 H10.9 Q12.7 1.2 12.7 3 V16.2 L11 14.9 L9.2 16.3 L7.1 14.9 L5 16.3 L3.2 14.9 Z" fill="none" stroke="#d4d6da" stroke-width="1.1" stroke-linejoin="round"/><path d="M10.4 4.8 Q9.9 4 8.9 4 Q7.7 4 7.7 5.1 Q7.7 6 8.9 6.3 Q10.4 6.6 10.4 7.7 Q10.4 8.9 9.1 8.9 Q8 8.9 7.5 8.1 M9 3.1 V4 M9 8.9 V9.9" fill="none" stroke="#d4d6da" stroke-width="0.9" stroke-linecap="round"/><path d="M3.3 10.7 H5.8 M3.3 12.4 H10.3" stroke="#d4d6da" stroke-width="1" stroke-linecap="round"/></svg>
<svg style="left:1568px;top:431.0px" width="22" height="26" viewBox="0 0 22 26"><path d="M6.9 9.55 H12.2 L15.35 12.7 V20.2 Q15.35 22.35 13.2 22.35 H6.9 Q4.75 22.35 4.75 20.2 V11.7 Q4.75 9.55 6.9 9.55 Z" fill="none" stroke="#2b8bdb" stroke-width="1.3" stroke-linejoin="round"/><path d="M12.2 9.55 V11.2 Q12.2 12.7 13.7 12.7 H15.35" fill="none" stroke="#2b8bdb" stroke-width="1.2"/><circle cx="10" cy="17.2" r="3.2" fill="#2b8bdb"/><path d="M9.6 15.5 V17.5 L10.9 18.5" stroke="#fff" stroke-width="0.9" fill="none" stroke-linecap="round"/></svg>
<div class="a" style="left:1681px;top:434.3px;width:97px;height:24.5px;background:#fff;border:1.2px solid #2b8bdb;border-radius:4px"></div>
<div class="a" style="left:1748px;top:434.3px;width:1.2px;height:24.5px;background:#2b8bdb"></div>
<svg style="left:1688px;top:436.0px" width="20" height="20" viewBox="0 0 20 20"><path d="M5.5 10.5 V6.6 Q5.5 4.4 7.7 4.4 H12.4 L16 7.9 V15 Q16 17.2 13.8 17.2 H7.7 Q5.5 17.2 5.5 15.4" fill="none" stroke="#2b8bdb" stroke-width="1.4" stroke-linejoin="round"/><path d="M12.4 4.4 V6.3 Q12.4 7.7 13.8 7.7 H16" fill="none" stroke="#2b8bdb" stroke-width="1.2"/><rect x="2.8" y="10" width="9.2" height="5.8" rx="1.7" fill="#2b8bdb"/><path d="M4.4 14.6 V11.4 H5.4 Q6.2 11.4 6.2 12.2 Q6.2 13 5.4 13 H4.4 M7.1 11.4 V14.6 H7.7 Q8.8 14.6 8.8 13 Q8.8 11.4 7.7 11.4 Z M9.7 14.6 V11.4 H11 M9.7 13 H10.7" fill="none" stroke="#fff" stroke-width="0.6" opacity="0.85"/></svg>
<svg style="left:1758px;top:444.2px" width="10" height="6" viewBox="0 0 10 6"><path d="M0.8 0.8 L5 5 L9.2 0.8" fill="none" stroke="#2b8bdb" stroke-width="1.3" stroke-linecap="round" stroke-linejoin="round"/></svg>
<div class="a" style="left:32px;top:471px;width:16px;height:16px;background:#fff;border:1.5px solid #4a4c52;border-radius:3.5px"></div>
<svg style="left:76px;top:464.0px" width="32" height="30" viewBox="0 0 32 30"><path d="M15.6 4 C12.2 4 10.1 6.4 10.1 10.4 C10.1 13.4 10.8 15.6 12 17 L12 23 C10.8 23.8 9.8 24.2 8.8 24.6 C11 26 13.4 26.6 16 26.6 C18.6 26.6 21.2 26 23.6 24.6 C22.6 24.2 21.2 23.8 20 23 L20 18.2 C21 17.4 21.8 15.4 21.8 10.6 C21.8 6.4 19.4 4 15.6 4 Z" fill="#3f4043"/></svg>
<svg style="left:1442.0px;top:472.0px" width="14" height="13" viewBox="0 0 14 13"><path d="M3.2 1 H10.8 Q13 1 13 3.2 V7.4 Q13 9.6 10.8 9.6 H6.4 L3.4 12 V9.6 Q1 9.6 1 7.4 V3.2 Q1 1 3.2 1 Z" fill="none" stroke="#d4d6da" stroke-width="1.3" stroke-linejoin="round"/><path d="M3.8 4.2 H10.2 M3.8 6.4 H6.6" stroke="#d4d6da" stroke-width="1.3" stroke-linecap="round"/></svg>
<svg style="left:1463.0px;top:472.5px" width="14" height="14" viewBox="0 0 14 14"><path d="M7 12.2 H3 Q1.2 12.2 1.2 10.4 V4 Q1.2 2.2 3 2.2 H10.8 Q12.6 2.2 12.6 4 V7" fill="none" stroke="#d4d6da" stroke-width="1.2" stroke-linecap="round"/><path d="M4 0.8 V3.4 M9.8 0.8 V3.4 M3.6 5.6 H10.2 M3.6 8.2 H5.4" stroke="#d4d6da" stroke-width="1.2" stroke-linecap="round"/><path d="M7.6 10.4 H13.2 M11.4 8.6 L13.2 10.4 L11.4 12.2" fill="none" stroke="#d4d6da" stroke-width="1.2" stroke-linecap="round" stroke-linejoin="round"/></svg>
<svg style="left:1483.0px;top:473.2px" width="16" height="13" viewBox="0 0 16 13"><circle cx="5.6" cy="3.6" r="2.7" fill="none" stroke="#d4d6da" stroke-width="1.2"/><path d="M0.8 12.4 Q1.4 7.8 5.6 7.8 Q9.8 7.8 10.4 12.4" fill="none" stroke="#d4d6da" stroke-width="1.2" stroke-linecap="round"/><circle cx="11.6" cy="5.8" r="1.8" fill="none" stroke="#d4d6da" stroke-width="1.2"/><path d="M10.6 9.2 Q14.6 8.8 15.2 12.4" fill="none" stroke="#d4d6da" stroke-width="1.2" stroke-linecap="round"/></svg>
<svg style="left:1505.0px;top:471.0px" width="15" height="16" viewBox="0 0 15 16"><path d="M1.6 6.6 C0.7 6.6 0.5 4.7 1.9 4.2 L6.5 1.9 Q7.5 1.3 8.5 1.9 L13.1 4.2 C14.5 4.7 14.3 6.6 13.4 6.6 Z" fill="none" stroke="#d4d6da" stroke-width="1.3" stroke-linejoin="round"/><path d="M2.7 7 V11 M5.6 7 V11 M8.6 7 V11 M11.5 7 V11" stroke="#d4d6da" stroke-width="1.3"/><rect x="1.1" y="11.1" width="12.8" height="3.3" rx="1.6" fill="none" stroke="#d4d6da" stroke-width="1.3"/></svg>
<svg style="left:1526.0px;top:470.0px" width="14" height="18" viewBox="0 0 14 18"><path d="M1.5 16.2 V3 Q1.5 1.2 3.3 1.2 H10.9 Q12.7 1.2 12.7 3 V16.2 L11 14.9 L9.2 16.3 L7.1 14.9 L5 16.3 L3.2 14.9 Z" fill="none" stroke="#d4d6da" stroke-width="1.1" stroke-linejoin="round"/><path d="M10.4 4.8 Q9.9 4 8.9 4 Q7.7 4 7.7 5.1 Q7.7 6 8.9 6.3 Q10.4 6.6 10.4 7.7 Q10.4 8.9 9.1 8.9 Q8 8.9 7.5 8.1 M9 3.1 V4 M9 8.9 V9.9" fill="none" stroke="#d4d6da" stroke-width="0.9" stroke-linecap="round"/><path d="M3.3 10.7 H5.8 M3.3 12.4 H10.3" stroke="#d4d6da" stroke-width="1" stroke-linecap="round"/></svg>
<svg style="left:1568px;top:463.0px" width="22" height="26" viewBox="0 0 22 26"><path d="M6.9 9.55 H12.2 L15.35 12.7 V20.2 Q15.35 22.35 13.2 22.35 H6.9 Q4.75 22.35 4.75 20.2 V11.7 Q4.75 9.55 6.9 9.55 Z" fill="none" stroke="#2b8bdb" stroke-width="1.3" stroke-linejoin="round"/><path d="M12.2 9.55 V11.2 Q12.2 12.7 13.7 12.7 H15.35" fill="none" stroke="#2b8bdb" stroke-width="1.2"/><circle cx="10" cy="17.2" r="3.2" fill="#2b8bdb"/><path d="M9.6 15.5 V17.5 L10.9 18.5" stroke="#fff" stroke-width="0.9" fill="none" stroke-linecap="round"/></svg>
<div class="a" style="left:1681px;top:466.3px;width:97px;height:24.5px;background:#fff;border:1.2px solid #2b8bdb;border-radius:4px"></div>
<div class="a" style="left:1748px;top:466.3px;width:1.2px;height:24.5px;background:#2b8bdb"></div>
<svg style="left:1688px;top:468.0px" width="20" height="20" viewBox="0 0 20 20"><path d="M5.5 10.5 V6.6 Q5.5 4.4 7.7 4.4 H12.4 L16 7.9 V15 Q16 17.2 13.8 17.2 H7.7 Q5.5 17.2 5.5 15.4" fill="none" stroke="#2b8bdb" stroke-width="1.4" stroke-linejoin="round"/><path d="M12.4 4.4 V6.3 Q12.4 7.7 13.8 7.7 H16" fill="none" stroke="#2b8bdb" stroke-width="1.2"/><rect x="2.8" y="10" width="9.2" height="5.8" rx="1.7" fill="#2b8bdb"/><path d="M4.4 14.6 V11.4 H5.4 Q6.2 11.4 6.2 12.2 Q6.2 13 5.4 13 H4.4 M7.1 11.4 V14.6 H7.7 Q8.8 14.6 8.8 13 Q8.8 11.4 7.7 11.4 Z M9.7 14.6 V11.4 H11 M9.7 13 H10.7" fill="none" stroke="#fff" stroke-width="0.6" opacity="0.85"/></svg>
<svg style="left:1758px;top:476.2px" width="10" height="6" viewBox="0 0 10 6"><path d="M0.8 0.8 L5 5 L9.2 0.8" fill="none" stroke="#2b8bdb" stroke-width="1.3" stroke-linecap="round" stroke-linejoin="round"/></svg>
<div class="a" style="left:32px;top:503px;width:16px;height:16px;background:#fff;border:1.5px solid #4a4c52;border-radius:3.5px"></div>
<svg style="left:76px;top:496.0px" width="32" height="30" viewBox="0 0 32 30"><path d="M15.6 4 C12.2 4 10.1 6.4 10.1 10.4 C10.1 13.4 10.8 15.6 12 17 L12 23 C10.8 23.8 9.8 24.2 8.8 24.6 C11 26 13.4 26.6 16 26.6 C18.6 26.6 21.2 26 23.6 24.6 C22.6 24.2 21.2 23.8 20 23 L20 18.2 C21 17.4 21.8 15.4 21.8 10.6 C21.8 6.4 19.4 4 15.6 4 Z" fill="#3f4043"/></svg>
<svg style="left:1442.0px;top:504.0px" width="14" height="13" viewBox="0 0 14 13"><path d="M3.2 1 H10.8 Q13 1 13 3.2 V7.4 Q13 9.6 10.8 9.6 H6.4 L3.4 12 V9.6 Q1 9.6 1 7.4 V3.2 Q1 1 3.2 1 Z" fill="none" stroke="#d4d6da" stroke-width="1.3" stroke-linejoin="round"/><path d="M3.8 4.2 H10.2 M3.8 6.4 H6.6" stroke="#d4d6da" stroke-width="1.3" stroke-linecap="round"/></svg>
<svg style="left:1463.0px;top:504.5px" width="14" height="14" viewBox="0 0 14 14"><path d="M7 12.2 H3 Q1.2 12.2 1.2 10.4 V4 Q1.2 2.2 3 2.2 H10.8 Q12.6 2.2 12.6 4 V7" fill="none" stroke="#d4d6da" stroke-width="1.2" stroke-linecap="round"/><path d="M4 0.8 V3.4 M9.8 0.8 V3.4 M3.6 5.6 H10.2 M3.6 8.2 H5.4" stroke="#d4d6da" stroke-width="1.2" stroke-linecap="round"/><path d="M7.6 10.4 H13.2 M11.4 8.6 L13.2 10.4 L11.4 12.2" fill="none" stroke="#d4d6da" stroke-width="1.2" stroke-linecap="round" stroke-linejoin="round"/></svg>
<svg style="left:1483.0px;top:505.2px" width="16" height="13" viewBox="0 0 16 13"><circle cx="5.6" cy="3.6" r="2.7" fill="none" stroke="#d4d6da" stroke-width="1.2"/><path d="M0.8 12.4 Q1.4 7.8 5.6 7.8 Q9.8 7.8 10.4 12.4" fill="none" stroke="#d4d6da" stroke-width="1.2" stroke-linecap="round"/><circle cx="11.6" cy="5.8" r="1.8" fill="none" stroke="#d4d6da" stroke-width="1.2"/><path d="M10.6 9.2 Q14.6 8.8 15.2 12.4" fill="none" stroke="#d4d6da" stroke-width="1.2" stroke-linecap="round"/></svg>
<svg style="left:1505.0px;top:503.0px" width="15" height="16" viewBox="0 0 15 16"><path d="M1.6 6.6 C0.7 6.6 0.5 4.7 1.9 4.2 L6.5 1.9 Q7.5 1.3 8.5 1.9 L13.1 4.2 C14.5 4.7 14.3 6.6 13.4 6.6 Z" fill="none" stroke="#f0a21a" stroke-width="1.3" stroke-linejoin="round"/><path d="M2.7 7 V11 M5.6 7 V11 M8.6 7 V11 M11.5 7 V11" stroke="#f0a21a" stroke-width="1.3"/><rect x="1.1" y="11.1" width="12.8" height="3.3" rx="1.6" fill="none" stroke="#f0a21a" stroke-width="1.3"/></svg>
<svg style="left:1526.0px;top:502.0px" width="14" height="18" viewBox="0 0 14 18"><path d="M1.5 16.2 V3 Q1.5 1.2 3.3 1.2 H10.9 Q12.7 1.2 12.7 3 V16.2 L11 14.9 L9.2 16.3 L7.1 14.9 L5 16.3 L3.2 14.9 Z" fill="none" stroke="#d4d6da" stroke-width="1.1" stroke-linejoin="round"/><path d="M10.4 4.8 Q9.9 4 8.9 4 Q7.7 4 7.7 5.1 Q7.7 6 8.9 6.3 Q10.4 6.6 10.4 7.7 Q10.4 8.9 9.1 8.9 Q8 8.9 7.5 8.1 M9 3.1 V4 M9 8.9 V9.9" fill="none" stroke="#d4d6da" stroke-width="0.9" stroke-linecap="round"/><path d="M3.3 10.7 H5.8 M3.3 12.4 H10.3" stroke="#d4d6da" stroke-width="1" stroke-linecap="round"/></svg>
<svg style="left:1568px;top:495.0px" width="22" height="26" viewBox="0 0 22 26"><path d="M6.9 9.55 H12.2 L15.35 12.7 V20.2 Q15.35 22.35 13.2 22.35 H6.9 Q4.75 22.35 4.75 20.2 V11.7 Q4.75 9.55 6.9 9.55 Z" fill="none" stroke="#2b8bdb" stroke-width="1.3" stroke-linejoin="round"/><path d="M12.2 9.55 V11.2 Q12.2 12.7 13.7 12.7 H15.35" fill="none" stroke="#2b8bdb" stroke-width="1.2"/><circle cx="10" cy="17.2" r="3.2" fill="#2b8bdb"/><path d="M9.6 15.5 V17.5 L10.9 18.5" stroke="#fff" stroke-width="0.9" fill="none" stroke-linecap="round"/></svg>
<div class="a" style="left:1681px;top:498.3px;width:97px;height:24.5px;background:#fff;border:1.2px solid #2b8bdb;border-radius:4px"></div>
<div class="a" style="left:1748px;top:498.3px;width:1.2px;height:24.5px;background:#2b8bdb"></div>
<svg style="left:1688px;top:500.0px" width="20" height="20" viewBox="0 0 20 20"><path d="M5.5 10.5 V6.6 Q5.5 4.4 7.7 4.4 H12.4 L16 7.9 V15 Q16 17.2 13.8 17.2 H7.7 Q5.5 17.2 5.5 15.4" fill="none" stroke="#2b8bdb" stroke-width="1.4" stroke-linejoin="round"/><path d="M12.4 4.4 V6.3 Q12.4 7.7 13.8 7.7 H16" fill="none" stroke="#2b8bdb" stroke-width="1.2"/><rect x="2.8" y="10" width="9.2" height="5.8" rx="1.7" fill="#2b8bdb"/><path d="M4.4 14.6 V11.4 H5.4 Q6.2 11.4 6.2 12.2 Q6.2 13 5.4 13 H4.4 M7.1 11.4 V14.6 H7.7 Q8.8 14.6 8.8 13 Q8.8 11.4 7.7 11.4 Z M9.7 14.6 V11.4 H11 M9.7 13 H10.7" fill="none" stroke="#fff" stroke-width="0.6" opacity="0.85"/></svg>
<svg style="left:1758px;top:508.2px" width="10" height="6" viewBox="0 0 10 6"><path d="M0.8 0.8 L5 5 L9.2 0.8" fill="none" stroke="#2b8bdb" stroke-width="1.3" stroke-linecap="round" stroke-linejoin="round"/></svg>
<div class="a" style="left:32px;top:535px;width:16px;height:16px;background:#fff;border:1.5px solid #4a4c52;border-radius:3.5px"></div>
<svg style="left:76px;top:528.0px" width="32" height="30" viewBox="0 0 32 30"><path d="M15.6 4 C12.2 4 10.1 6.4 10.1 10.4 C10.1 13.4 10.8 15.6 12 17 L12 23 C10.8 23.8 9.8 24.2 8.8 24.6 C11 26 13.4 26.6 16 26.6 C18.6 26.6 21.2 26 23.6 24.6 C22.6 24.2 21.2 23.8 20 23 L20 18.2 C21 17.4 21.8 15.4 21.8 10.6 C21.8 6.4 19.4 4 15.6 4 Z" fill="#3f4043"/></svg>
<svg style="left:1442.0px;top:536.0px" width="14" height="13" viewBox="0 0 14 13"><path d="M3.2 1 H10.8 Q13 1 13 3.2 V7.4 Q13 9.6 10.8 9.6 H6.4 L3.4 12 V9.6 Q1 9.6 1 7.4 V3.2 Q1 1 3.2 1 Z" fill="none" stroke="#d4d6da" stroke-width="1.3" stroke-linejoin="round"/><path d="M3.8 4.2 H10.2 M3.8 6.4 H6.6" stroke="#d4d6da" stroke-width="1.3" stroke-linecap="round"/></svg>
<svg style="left:1463.0px;top:536.5px" width="14" height="14" viewBox="0 0 14 14"><path d="M7 12.2 H3 Q1.2 12.2 1.2 10.4 V4 Q1.2 2.2 3 2.2 H10.8 Q12.6 2.2 12.6 4 V7" fill="none" stroke="#d4d6da" stroke-width="1.2" stroke-linecap="round"/><path d="M4 0.8 V3.4 M9.8 0.8 V3.4 M3.6 5.6 H10.2 M3.6 8.2 H5.4" stroke="#d4d6da" stroke-width="1.2" stroke-linecap="round"/><path d="M7.6 10.4 H13.2 M11.4 8.6 L13.2 10.4 L11.4 12.2" fill="none" stroke="#d4d6da" stroke-width="1.2" stroke-linecap="round" stroke-linejoin="round"/></svg>
<svg style="left:1483.0px;top:537.2px" width="16" height="13" viewBox="0 0 16 13"><circle cx="5.6" cy="3.6" r="2.7" fill="none" stroke="#d4d6da" stroke-width="1.2"/><path d="M0.8 12.4 Q1.4 7.8 5.6 7.8 Q9.8 7.8 10.4 12.4" fill="none" stroke="#d4d6da" stroke-width="1.2" stroke-linecap="round"/><circle cx="11.6" cy="5.8" r="1.8" fill="none" stroke="#d4d6da" stroke-width="1.2"/><path d="M10.6 9.2 Q14.6 8.8 15.2 12.4" fill="none" stroke="#d4d6da" stroke-width="1.2" stroke-linecap="round"/></svg>
<svg style="left:1505.0px;top:535.0px" width="15" height="16" viewBox="0 0 15 16"><path d="M1.6 6.6 C0.7 6.6 0.5 4.7 1.9 4.2 L6.5 1.9 Q7.5 1.3 8.5 1.9 L13.1 4.2 C14.5 4.7 14.3 6.6 13.4 6.6 Z" fill="none" stroke="#d4d6da" stroke-width="1.3" stroke-linejoin="round"/><path d="M2.7 7 V11 M5.6 7 V11 M8.6 7 V11 M11.5 7 V11" stroke="#d4d6da" stroke-width="1.3"/><rect x="1.1" y="11.1" width="12.8" height="3.3" rx="1.6" fill="none" stroke="#d4d6da" stroke-width="1.3"/></svg>
<svg style="left:1526.0px;top:534.0px" width="14" height="18" viewBox="0 0 14 18"><path d="M1.5 16.2 V3 Q1.5 1.2 3.3 1.2 H10.9 Q12.7 1.2 12.7 3 V16.2 L11 14.9 L9.2 16.3 L7.1 14.9 L5 16.3 L3.2 14.9 Z" fill="none" stroke="#d4d6da" stroke-width="1.1" stroke-linejoin="round"/><path d="M10.4 4.8 Q9.9 4 8.9 4 Q7.7 4 7.7 5.1 Q7.7 6 8.9 6.3 Q10.4 6.6 10.4 7.7 Q10.4 8.9 9.1 8.9 Q8 8.9 7.5 8.1 M9 3.1 V4 M9 8.9 V9.9" fill="none" stroke="#d4d6da" stroke-width="0.9" stroke-linecap="round"/><path d="M3.3 10.7 H5.8 M3.3 12.4 H10.3" stroke="#d4d6da" stroke-width="1" stroke-linecap="round"/></svg>
<svg style="left:1568px;top:527.0px" width="22" height="26" viewBox="0 0 22 26"><path d="M6.9 9.55 H12.2 L15.35 12.7 V20.2 Q15.35 22.35 13.2 22.35 H6.9 Q4.75 22.35 4.75 20.2 V11.7 Q4.75 9.55 6.9 9.55 Z" fill="none" stroke="#2b8bdb" stroke-width="1.3" stroke-linejoin="round"/><path d="M12.2 9.55 V11.2 Q12.2 12.7 13.7 12.7 H15.35" fill="none" stroke="#2b8bdb" stroke-width="1.2"/><circle cx="10" cy="17.2" r="3.2" fill="#2b8bdb"/><path d="M9.6 15.5 V17.5 L10.9 18.5" stroke="#fff" stroke-width="0.9" fill="none" stroke-linecap="round"/></svg>
<div class="a" style="left:1681px;top:530.3px;width:97px;height:24.5px;background:#fff;border:1.2px solid #2b8bdb;border-radius:4px"></div>
<div class="a" style="left:1748px;top:530.3px;width:1.2px;height:24.5px;background:#2b8bdb"></div>
<svg style="left:1688px;top:532.0px" width="20" height="20" viewBox="0 0 20 20"><path d="M5.5 10.5 V6.6 Q5.5 4.4 7.7 4.4 H12.4 L16 7.9 V15 Q16 17.2 13.8 17.2 H7.7 Q5.5 17.2 5.5 15.4" fill="none" stroke="#2b8bdb" stroke-width="1.4" stroke-linejoin="round"/><path d="M12.4 4.4 V6.3 Q12.4 7.7 13.8 7.7 H16" fill="none" stroke="#2b8bdb" stroke-width="1.2"/><rect x="2.8" y="10" width="9.2" height="5.8" rx="1.7" fill="#2b8bdb"/><path d="M4.4 14.6 V11.4 H5.4 Q6.2 11.4 6.2 12.2 Q6.2 13 5.4 13 H4.4 M7.1 11.4 V14.6 H7.7 Q8.8 14.6 8.8 13 Q8.8 11.4 7.7 11.4 Z M9.7 14.6 V11.4 H11 M9.7 13 H10.7" fill="none" stroke="#fff" stroke-width="0.6" opacity="0.85"/></svg>
<svg style="left:1758px;top:540.2px" width="10" height="6" viewBox="0 0 10 6"><path d="M0.8 0.8 L5 5 L9.2 0.8" fill="none" stroke="#2b8bdb" stroke-width="1.3" stroke-linecap="round" stroke-linejoin="round"/></svg>
<div class="a" style="left:824px;top:295px;width:603px;height:45px;background:#fff;border-radius:5px;box-shadow:0 3px 10px rgba(0,0,0,0.10),0 0 1px rgba(0,0,0,0.06);z-index:10"></div>
<svg style="left:1426px;top:310px;z-index:10" width="7" height="15" viewBox="0 0 7 15"><path d="M0 0 L6.5 7.5 L0 15 Z" fill="#fff"/></svg>
<svg style="left:840.5px;top:310.5px;z-index:11" width="15" height="14" viewBox="0 0 15 14"><path d="M3.4 1 H11.6 Q14 1 14 3.4 V7.6 Q14 10 11.6 10 H6.8 L3.6 12.6 V10 Q1 10 1 7.6 V3.4 Q1 1 3.4 1 Z" fill="none" stroke="#55595f" stroke-width="1.4" stroke-linejoin="round"/><path d="M4.2 4.4 H10.8 M4.2 6.7 H7" stroke="#55595f" stroke-width="1.4" stroke-linecap="round"/></svg>
<div class="a" style="left:1673px;top:298px;width:83px;height:40px;border:5px solid #df9150;box-shadow:2px 4px 6px rgba(0,0,0,0.35), inset 2px 3px 4px rgba(0,0,0,0.30);z-index:12"></div>
<svg style="left:849px;top:614px" width="8" height="13" viewBox="0 0 8 13"><path d="M6.8 1 L1.4 6.5 L6.8 12" fill="none" stroke="#d3d6da" stroke-width="1.3" stroke-linecap="round" stroke-linejoin="round"/></svg>
<div class="a" style="left:881px;top:605px;width:40px;height:31px;background:#2d8cdb;border-radius:4px"></div>
<svg style="left:895px;top:612px" width="10" height="16" viewBox="0 0 10 16"><path d="M6.6 3.2 V13.3 M6.6 3.3 L4.2 4.7" fill="none" stroke="#fff" stroke-width="1.35" stroke-linecap="square"/></svg>
<svg style="left:945px;top:614px" width="8" height="13" viewBox="0 0 8 13"><path d="M1.2 1 L6.6 6.5 L1.2 12" fill="none" stroke="#d3d6da" stroke-width="1.3" stroke-linecap="round" stroke-linejoin="round"/></svg>
<svg style="left:1698px;top:618px" width="11" height="7" viewBox="0 0 11 7"><path d="M0.8 0.8 L5.5 5.6 L10.2 0.8" fill="none" stroke="#2b8bdb" stroke-width="1.3" stroke-linecap="round" stroke-linejoin="round"/></svg>
<span class="t" style="left:93.53px;top:23.80px;font-size:14.3px;line-height:14.3px;font-weight:400;color:#3b3f45;letter-spacing:0.338px;transform:scaleX(1.0680);transform-origin:0 0;">Home</span>
<span class="t" style="left:175.45px;top:23.80px;font-size:14.3px;line-height:14.3px;font-weight:400;color:#3b3f45;letter-spacing:0.168px;transform:scaleX(1.0471);transform-origin:0 0;">People</span>
<span class="t" style="left:284.20px;top:23.80px;font-size:14.3px;line-height:14.3px;font-weight:400;color:#3b3f45;letter-spacing:0.239px;transform:scaleX(1.0774);transform-origin:0 0;">Operations</span>
<span class="t" style="left:423.00px;top:23.80px;font-size:14.3px;line-height:14.3px;font-weight:400;color:#3b3f45;letter-spacing:0.103px;transform:scaleX(1.0217);transform-origin:0 0;">Work</span>
<span class="t" style="left:519.00px;top:23.80px;font-size:14.3px;line-height:14.3px;font-weight:400;color:#3b3f45;letter-spacing:0.241px;transform:scaleX(1.0803);transform-origin:0 0;">Time &amp; Attendance</span>
<span class="t" style="left:714.00px;top:24.05px;font-size:14px;line-height:14px;font-weight:700;color:#2b8bdb;letter-spacing:0.188px;transform:scaleX(1.0611);transform-origin:0 0;">Payroll</span>
<span class="t" style="left:823.30px;top:23.80px;font-size:14.3px;line-height:14.3px;font-weight:400;color:#3b3f45;letter-spacing:0.276px;transform:scaleX(1.1025);transform-origin:0 0;">Invoicing</span>
<span class="t" style="left:947.94px;top:23.80px;font-size:14.3px;line-height:14.3px;font-weight:400;color:#3b3f45;letter-spacing:0.193px;transform:scaleX(1.0585);transform-origin:0 0;">Reports</span>
<span class="t" style="left:1483.00px;top:24.75px;font-size:14px;line-height:14px;font-weight:400;color:#a9acb2;letter-spacing:0.274px;transform:scaleX(1.0792);transform-origin:0 0;">Search</span>
<span class="t" style="left:14.42px;top:77.18px;font-size:15.5px;line-height:15.5px;font-weight:700;color:#4a4e57;letter-spacing:0.265px;transform:scaleX(1.0794);transform-origin:0 0;">Payroll</span>
<span class="t" style="left:14.85px;top:99.69px;font-size:41px;line-height:41px;font-weight:700;color:#4a4e57;letter-spacing:0.359px;transform:scaleX(1.0241);transform-origin:0 0;">Pay</span>
<span class="t" style="left:1373.17px;top:123.76px;font-size:16px;line-height:16px;font-weight:700;color:#2b8bdb;letter-spacing:0.118px;transform:scaleX(1.0350);transform-origin:0 0;">Draft Payslips</span>
<span class="t" style="left:1509.70px;top:123.76px;font-size:16px;line-height:16px;font-weight:700;color:#6e747c;letter-spacing:0.178px;transform:scaleX(1.0501);transform-origin:0 0;">Generated payslips</span>
<span class="t" style="left:1693.30px;top:123.76px;font-size:16px;line-height:16px;font-weight:700;color:#6e747c;letter-spacing:-0.031px;transform:scaleX(0.9923);transform-origin:0 0;">ABA History</span>
<span class="t" style="left:15.10px;top:176.98px;font-size:15.5px;line-height:15.5px;font-weight:400;color:#3a3d42;letter-spacing:0.190px;transform:scaleX(1.0666);transform-origin:0 0;">Select employees to review drafts and generate payslips.</span>
<span class="t" style="left:447.24px;top:176.98px;font-size:15.5px;line-height:15.5px;font-weight:400;color:#2b8bdb;letter-spacing:0.174px;transform:scaleX(1.0585);transform-origin:0 0;">Need help with processing payslips?</span>
<span class="t" style="left:1775.30px;top:192.86px;font-size:9.5px;line-height:9.5px;font-weight:400;color:#b4b7bf;letter-spacing:0.000px;transform:scaleX(1.15);transform-origin:left">0</span>
<span class="t" style="left:24.40px;top:223.53px;font-size:14.5px;line-height:14.5px;font-weight:400;color:#b9bcc2;letter-spacing:0.146px;transform:scaleX(1.0385);transform-origin:0 0;">Search</span>
<span class="t" style="left:234.40px;top:223.13px;font-size:14.5px;line-height:14.5px;font-weight:400;color:#4a4d53;letter-spacing:0.062px;transform:scaleX(1.0175);transform-origin:0 0;">7 May 2023</span>
<span class="t" style="left:1578.75px;top:222.63px;font-size:14.5px;line-height:14.5px;font-weight:400;color:#2b8bdb;letter-spacing:0.132px;transform:scaleX(1.0514);transform-origin:0 0;">Filter</span>
<span class="t" style="left:1653.00px;top:221.60px;font-size:15px;line-height:15px;font-weight:400;color:#ffffff;letter-spacing:0.147px;transform:scaleX(1.0455);transform-origin:0 0;-webkit-text-stroke:0.45px #fff">Add Payslip</span>
<span class="t" style="left:78.88px;top:280.03px;font-size:14.5px;line-height:14.5px;font-weight:400;color:#595e66;letter-spacing:0.571px;transform:scaleX(1.1188);transform-origin:0 0;">Name</span>
<span class="t" style="left:530.93px;top:280.03px;font-size:14.5px;line-height:14.5px;font-weight:400;color:#595e66;letter-spacing:0.295px;transform:scaleX(1.0690);transform-origin:0 0;">Hrs</span>
<span class="t" style="left:662.70px;top:280.03px;font-size:14.5px;line-height:14.5px;font-weight:400;color:#595e66;letter-spacing:0.192px;transform:scaleX(1.0488);transform-origin:0 0;">Gross</span>
<span class="t" style="left:817.80px;top:280.03px;font-size:14.5px;line-height:14.5px;font-weight:400;color:#595e66;letter-spacing:0.172px;transform:scaleX(1.0356);transform-origin:0 0;">Tax</span>
<span class="t" style="left:927.87px;top:280.03px;font-size:14.5px;line-height:14.5px;font-weight:400;color:#595e66;letter-spacing:0.418px;transform:scaleX(1.1261);transform-origin:0 0;">Deducted</span>
<span class="t" style="left:1122.90px;top:280.03px;font-size:14.5px;line-height:14.5px;font-weight:400;color:#595e66;letter-spacing:0.430px;transform:scaleX(1.1029);transform-origin:0 0;">Net</span>
<span class="t" style="left:1248.50px;top:280.03px;font-size:14.5px;line-height:14.5px;font-weight:400;color:#595e66;letter-spacing:0.189px;transform:scaleX(1.0475);transform-origin:0 0;">Super</span>
<span class="t" style="left:1325.90px;top:280.03px;font-size:14.5px;line-height:14.5px;font-weight:400;color:#595e66;letter-spacing:0.295px;transform:scaleX(1.0986);transform-origin:0 0;">Period end</span>
<span class="t" style="left:1561.00px;top:280.03px;font-size:14.5px;line-height:14.5px;font-weight:400;color:#595e66;letter-spacing:0.305px;transform:scaleX(1.0925);transform-origin:0 0;">Timesheet</span>
<span class="t" style="left:1692.91px;top:280.03px;font-size:14.5px;line-height:14.5px;font-weight:400;color:#595e66;letter-spacing:0.280px;transform:scaleX(1.0938);transform-origin:0 0;">Payslip</span>
<span class="t" style="left:107.81px;top:309.83px;font-size:14.5px;line-height:14.5px;font-weight:400;color:#2b8bdb;letter-spacing:0.268px;transform:scaleX(1.0940);transform-origin:0 0;">Megan Mansfield (12)</span>
<span class="t" style="left:535.05px;top:311.35px;font-size:14px;line-height:14px;font-weight:400;color:#6d7380;letter-spacing:0.226px;transform:scaleX(1.0635);transform-origin:0 0;">76.00</span>
<span class="t" style="left:652.70px;top:311.35px;font-size:14px;line-height:14px;font-weight:400;color:#6d7380;letter-spacing:0.237px;transform:scaleX(1.0762);transform-origin:0 0;">$3,076.92</span>
<span class="t" style="left:804.28px;top:311.35px;font-size:14px;line-height:14px;font-weight:400;color:#6d7380;letter-spacing:0.238px;transform:scaleX(1.0702);transform-origin:0 0;">$746.00</span>
<span class="t" style="left:980.85px;top:311.35px;font-size:14px;line-height:14px;font-weight:400;color:#b3b6bb;letter-spacing:0.239px;transform:scaleX(1.0675);transform-origin:0 0;">$0.00</span>
<span class="t" style="left:1097.70px;top:311.35px;font-size:14px;line-height:14px;font-weight:400;color:#6d7380;letter-spacing:0.237px;transform:scaleX(1.0762);transform-origin:0 0;">$2,330.92</span>
<span class="t" style="left:1253.08px;top:311.35px;font-size:14px;line-height:14px;font-weight:400;color:#6d7380;letter-spacing:0.238px;transform:scaleX(1.0702);transform-origin:0 0;">$323.08</span>
<span class="t" style="left:1342.48px;top:311.35px;font-size:14px;line-height:14px;font-weight:400;color:#64686e;letter-spacing:0.238px;transform:scaleX(1.0730);transform-origin:0 0;">7 May 2023</span>
<span class="t" style="left:1588.00px;top:311.13px;font-size:14.5px;line-height:14.5px;font-weight:400;color:#2b8bdb;letter-spacing:0.000px;">x</span>
<span class="t" style="left:1599.50px;top:311.13px;font-size:14.5px;line-height:14.5px;font-weight:400;color:#2b8bdb;letter-spacing:0.000px;">2</span>
<span class="t" style="left:1714.70px;top:311.35px;font-size:14px;line-height:14px;font-weight:400;color:#2b8bdb;letter-spacing:-0.011px;transform:scaleX(0.9979);transform-origin:0 0;">740</span>
<span class="t" style="left:107.47px;top:341.83px;font-size:14.5px;line-height:14.5px;font-weight:400;color:#2b8bdb;letter-spacing:0.366px;transform:scaleX(1.1336);transform-origin:0 0;">Nathan Jordan (39)</span>
<span class="t" style="left:535.05px;top:343.35px;font-size:14px;line-height:14px;font-weight:400;color:#6d7380;letter-spacing:0.226px;transform:scaleX(1.0635);transform-origin:0 0;">76.00</span>
<span class="t" style="left:652.70px;top:343.35px;font-size:14px;line-height:14px;font-weight:400;color:#6d7380;letter-spacing:0.237px;transform:scaleX(1.0762);transform-origin:0 0;">$2,884.62</span>
<span class="t" style="left:804.28px;top:343.35px;font-size:14px;line-height:14px;font-weight:400;color:#6d7380;letter-spacing:0.238px;transform:scaleX(1.0702);transform-origin:0 0;">$630.00</span>
<span class="t" style="left:980.85px;top:343.35px;font-size:14px;line-height:14px;font-weight:400;color:#b3b6bb;letter-spacing:0.239px;transform:scaleX(1.0675);transform-origin:0 0;">$0.00</span>
<span class="t" style="left:1097.70px;top:343.35px;font-size:14px;line-height:14px;font-weight:400;color:#6d7380;letter-spacing:0.237px;transform:scaleX(1.0762);transform-origin:0 0;">$2,254.62</span>
<span class="t" style="left:1253.08px;top:343.35px;font-size:14px;line-height:14px;font-weight:400;color:#6d7380;letter-spacing:0.238px;transform:scaleX(1.0702);transform-origin:0 0;">$302.89</span>
<span class="t" style="left:1342.48px;top:343.35px;font-size:14px;line-height:14px;font-weight:400;color:#64686e;letter-spacing:0.238px;transform:scaleX(1.0730);transform-origin:0 0;">7 May 2023</span>
<span class="t" style="left:1588.00px;top:343.13px;font-size:14.5px;line-height:14.5px;font-weight:400;color:#2b8bdb;letter-spacing:0.000px;">x</span>
<span class="t" style="left:1599.50px;top:343.13px;font-size:14.5px;line-height:14.5px;font-weight:400;color:#2b8bdb;letter-spacing:0.000px;">2</span>
<span class="t" style="left:1714.70px;top:343.35px;font-size:14px;line-height:14px;font-weight:400;color:#2b8bdb;letter-spacing:-0.011px;transform:scaleX(0.9979);transform-origin:0 0;">747</span>
<span class="t" style="left:107.60px;top:373.83px;font-size:14.5px;line-height:14.5px;font-weight:400;color:#2b8bdb;letter-spacing:0.145px;transform:scaleX(1.0448);transform-origin:0 0;">Qun Gao (11)</span>
<span class="t" style="left:535.05px;top:375.35px;font-size:14px;line-height:14px;font-weight:400;color:#6d7380;letter-spacing:0.226px;transform:scaleX(1.0635);transform-origin:0 0;">76.00</span>
<span class="t" style="left:652.70px;top:375.35px;font-size:14px;line-height:14px;font-weight:400;color:#6d7380;letter-spacing:0.237px;transform:scaleX(1.0762);transform-origin:0 0;">$6,346.15</span>
<span class="t" style="left:790.90px;top:375.35px;font-size:14px;line-height:14px;font-weight:400;color:#6d7380;letter-spacing:0.237px;transform:scaleX(1.0762);transform-origin:0 0;">$1,902.00</span>
<span class="t" style="left:980.85px;top:375.35px;font-size:14px;line-height:14px;font-weight:400;color:#b3b6bb;letter-spacing:0.239px;transform:scaleX(1.0675);transform-origin:0 0;">$0.00</span>
<span class="t" style="left:1097.70px;top:375.35px;font-size:14px;line-height:14px;font-weight:400;color:#6d7380;letter-spacing:0.237px;transform:scaleX(1.0762);transform-origin:0 0;">$4,444.15</span>
<span class="t" style="left:1253.08px;top:375.35px;font-size:14px;line-height:14px;font-weight:400;color:#6d7380;letter-spacing:0.238px;transform:scaleX(1.0702);transform-origin:0 0;">$666.35</span>
<span class="t" style="left:1342.48px;top:375.35px;font-size:14px;line-height:14px;font-weight:400;color:#64686e;letter-spacing:0.238px;transform:scaleX(1.0730);transform-origin:0 0;">7 May 2023</span>
<span class="t" style="left:1588.00px;top:375.13px;font-size:14.5px;line-height:14.5px;font-weight:400;color:#2b8bdb;letter-spacing:0.000px;">x</span>
<span class="t" style="left:1599.50px;top:375.13px;font-size:14.5px;line-height:14.5px;font-weight:400;color:#2b8bdb;letter-spacing:0.000px;">2</span>
<span class="t" style="left:1714.70px;top:375.35px;font-size:14px;line-height:14px;font-weight:400;color:#2b8bdb;letter-spacing:-0.011px;transform:scaleX(0.9979);transform-origin:0 0;">751</span>
<span class="t" style="left:107.80px;top:405.83px;font-size:14.5px;line-height:14.5px;font-weight:400;color:#2b8bdb;letter-spacing:0.308px;transform:scaleX(1.1002);transform-origin:0 0;">Rodney Thomas (57)</span>
<span class="t" style="left:543.64px;top:407.35px;font-size:14px;line-height:14px;font-weight:400;color:#b3b6bb;letter-spacing:0.226px;transform:scaleX(1.0612);transform-origin:0 0;">0.00</span>
<span class="t" style="left:683.35px;top:407.35px;font-size:14px;line-height:14px;font-weight:400;color:#b3b6bb;letter-spacing:0.239px;transform:scaleX(1.0675);transform-origin:0 0;">$0.00</span>
<span class="t" style="left:821.55px;top:407.35px;font-size:14px;line-height:14px;font-weight:400;color:#b3b6bb;letter-spacing:0.239px;transform:scaleX(1.0675);transform-origin:0 0;">$0.00</span>
<span class="t" style="left:980.85px;top:407.35px;font-size:14px;line-height:14px;font-weight:400;color:#b3b6bb;letter-spacing:0.239px;transform:scaleX(1.0675);transform-origin:0 0;">$0.00</span>
<span class="t" style="left:1128.35px;top:407.35px;font-size:14px;line-height:14px;font-weight:400;color:#b3b6bb;letter-spacing:0.239px;transform:scaleX(1.0675);transform-origin:0 0;">$0.00</span>
<span class="t" style="left:1270.35px;top:407.35px;font-size:14px;line-height:14px;font-weight:400;color:#b3b6bb;letter-spacing:0.239px;transform:scaleX(1.0675);transform-origin:0 0;">$0.00</span>
<span class="t" style="left:1342.48px;top:407.35px;font-size:14px;line-height:14px;font-weight:400;color:#64686e;letter-spacing:0.238px;transform:scaleX(1.0730);transform-origin:0 0;">7 May 2023</span>
<span class="t" style="left:1714.70px;top:407.35px;font-size:14px;line-height:14px;font-weight:400;color:#2b8bdb;letter-spacing:-0.011px;transform:scaleX(0.9979);transform-origin:0 0;">760</span>
<span class="t" style="left:107.60px;top:437.83px;font-size:14.5px;line-height:14.5px;font-weight:400;color:#2b8bdb;letter-spacing:0.290px;transform:scaleX(1.0962);transform-origin:0 0;">Romeo Perepeper (27)</span>
<span class="t" style="left:535.05px;top:439.35px;font-size:14px;line-height:14px;font-weight:400;color:#6d7380;letter-spacing:0.226px;transform:scaleX(1.0635);transform-origin:0 0;">76.00</span>
<span class="t" style="left:652.70px;top:439.35px;font-size:14px;line-height:14px;font-weight:400;color:#6d7380;letter-spacing:0.237px;transform:scaleX(1.0762);transform-origin:0 0;">$3,730.77</span>
<span class="t" style="left:804.28px;top:439.35px;font-size:14px;line-height:14px;font-weight:400;color:#6d7380;letter-spacing:0.238px;transform:scaleX(1.0702);transform-origin:0 0;">$922.00</span>
<span class="t" style="left:980.85px;top:439.35px;font-size:14px;line-height:14px;font-weight:400;color:#b3b6bb;letter-spacing:0.239px;transform:scaleX(1.0675);transform-origin:0 0;">$0.00</span>
<span class="t" style="left:1097.70px;top:439.35px;font-size:14px;line-height:14px;font-weight:400;color:#6d7380;letter-spacing:0.237px;transform:scaleX(1.0762);transform-origin:0 0;">$2,808.77</span>
<span class="t" style="left:1253.08px;top:439.35px;font-size:14px;line-height:14px;font-weight:400;color:#6d7380;letter-spacing:0.238px;transform:scaleX(1.0702);transform-origin:0 0;">$391.73</span>
<span class="t" style="left:1342.48px;top:439.35px;font-size:14px;line-height:14px;font-weight:400;color:#64686e;letter-spacing:0.238px;transform:scaleX(1.0730);transform-origin:0 0;">7 May 2023</span>
<span class="t" style="left:1588.00px;top:439.13px;font-size:14.5px;line-height:14.5px;font-weight:400;color:#2b8bdb;letter-spacing:0.000px;">x</span>
<span class="t" style="left:1599.50px;top:439.13px;font-size:14.5px;line-height:14.5px;font-weight:400;color:#2b8bdb;letter-spacing:0.000px;">2</span>
<span class="t" style="left:1714.70px;top:439.35px;font-size:14px;line-height:14px;font-weight:400;color:#2b8bdb;letter-spacing:-0.011px;transform:scaleX(0.9979);transform-origin:0 0;">743</span>
<span class="t" style="left:107.60px;top:469.83px;font-size:14.5px;line-height:14.5px;font-weight:400;color:#2b8bdb;letter-spacing:0.209px;transform:scaleX(1.0656);transform-origin:0 0;">Sam Banks (15)</span>
<span class="t" style="left:535.05px;top:471.35px;font-size:14px;line-height:14px;font-weight:400;color:#6d7380;letter-spacing:0.226px;transform:scaleX(1.0635);transform-origin:0 0;">76.00</span>
<span class="t" style="left:652.70px;top:471.35px;font-size:14px;line-height:14px;font-weight:400;color:#6d7380;letter-spacing:0.237px;transform:scaleX(1.0762);transform-origin:0 0;">$5,576.93</span>
<span class="t" style="left:790.90px;top:471.35px;font-size:14px;line-height:14px;font-weight:400;color:#6d7380;letter-spacing:0.237px;transform:scaleX(1.0762);transform-origin:0 0;">$1,602.00</span>
<span class="t" style="left:980.85px;top:471.35px;font-size:14px;line-height:14px;font-weight:400;color:#b3b6bb;letter-spacing:0.239px;transform:scaleX(1.0675);transform-origin:0 0;">$0.00</span>
<span class="t" style="left:1097.70px;top:471.35px;font-size:14px;line-height:14px;font-weight:400;color:#6d7380;letter-spacing:0.237px;transform:scaleX(1.0762);transform-origin:0 0;">$3,974.93</span>
<span class="t" style="left:1253.08px;top:471.35px;font-size:14px;line-height:14px;font-weight:400;color:#6d7380;letter-spacing:0.238px;transform:scaleX(1.0702);transform-origin:0 0;">$585.58</span>
<span class="t" style="left:1342.48px;top:471.35px;font-size:14px;line-height:14px;font-weight:400;color:#64686e;letter-spacing:0.238px;transform:scaleX(1.0730);transform-origin:0 0;">7 May 2023</span>
<span class="t" style="left:1588.00px;top:471.13px;font-size:14.5px;line-height:14.5px;font-weight:400;color:#2b8bdb;letter-spacing:0.000px;">x</span>
<span class="t" style="left:1599.50px;top:471.13px;font-size:14.5px;line-height:14.5px;font-weight:400;color:#2b8bdb;letter-spacing:0.000px;">2</span>
<span class="t" style="left:1714.70px;top:471.35px;font-size:14px;line-height:14px;font-weight:400;color:#2b8bdb;letter-spacing:-0.011px;transform:scaleX(0.9979);transform-origin:0 0;">749</span>
<span class="t" style="left:107.80px;top:501.83px;font-size:14.5px;line-height:14.5px;font-weight:400;color:#2b8bdb;letter-spacing:0.307px;transform:scaleX(1.1181);transform-origin:0 0;">Tennille Johnson (6)</span>
<span class="t" style="left:535.05px;top:503.35px;font-size:14px;line-height:14px;font-weight:400;color:#6d7380;letter-spacing:0.226px;transform:scaleX(1.0635);transform-origin:0 0;">76.00</span>
<span class="t" style="left:652.70px;top:503.35px;font-size:14px;line-height:14px;font-weight:400;color:#6d7380;letter-spacing:0.237px;transform:scaleX(1.0762);transform-origin:0 0;">$1,669.72</span>
<span class="t" style="left:804.28px;top:503.35px;font-size:14px;line-height:14px;font-weight:400;color:#6d7380;letter-spacing:0.238px;transform:scaleX(1.0702);transform-origin:0 0;">$785.00</span>
<span class="t" style="left:980.85px;top:503.35px;font-size:14px;line-height:14px;font-weight:400;color:#b3b6bb;letter-spacing:0.239px;transform:scaleX(1.0675);transform-origin:0 0;">$0.00</span>
<span class="t" style="left:1111.08px;top:503.35px;font-size:14px;line-height:14px;font-weight:400;color:#6d7380;letter-spacing:0.238px;transform:scaleX(1.0702);transform-origin:0 0;">$884.72</span>
<span class="t" style="left:1253.08px;top:503.35px;font-size:14px;line-height:14px;font-weight:400;color:#6d7380;letter-spacing:0.238px;transform:scaleX(1.0702);transform-origin:0 0;">$175.32</span>
<span class="t" style="left:1342.48px;top:503.35px;font-size:14px;line-height:14px;font-weight:400;color:#64686e;letter-spacing:0.238px;transform:scaleX(1.0730);transform-origin:0 0;">7 May 2023</span>
<span class="t" style="left:1588.00px;top:503.13px;font-size:14.5px;line-height:14.5px;font-weight:400;color:#2b8bdb;letter-spacing:0.000px;">x</span>
<span class="t" style="left:1599.50px;top:503.13px;font-size:14.5px;line-height:14.5px;font-weight:400;color:#2b8bdb;letter-spacing:0.000px;">2</span>
<span class="t" style="left:1714.70px;top:503.35px;font-size:14px;line-height:14px;font-weight:400;color:#2b8bdb;letter-spacing:-0.011px;transform:scaleX(0.9979);transform-origin:0 0;">741</span>
<span class="t" style="left:107.80px;top:533.83px;font-size:14.5px;line-height:14.5px;font-weight:400;color:#2b8bdb;letter-spacing:0.309px;transform:scaleX(1.1137);transform-origin:0 0;">Tina Jackson (5)</span>
<span class="t" style="left:535.05px;top:535.35px;font-size:14px;line-height:14px;font-weight:400;color:#6d7380;letter-spacing:0.226px;transform:scaleX(1.0635);transform-origin:0 0;">76.00</span>
<span class="t" style="left:652.70px;top:535.35px;font-size:14px;line-height:14px;font-weight:400;color:#6d7380;letter-spacing:0.237px;transform:scaleX(1.0762);transform-origin:0 0;">$4,038.47</span>
<span class="t" style="left:790.90px;top:535.35px;font-size:14px;line-height:14px;font-weight:400;color:#6d7380;letter-spacing:0.237px;transform:scaleX(1.0762);transform-origin:0 0;">$1,028.00</span>
<span class="t" style="left:980.85px;top:535.35px;font-size:14px;line-height:14px;font-weight:400;color:#b3b6bb;letter-spacing:0.239px;transform:scaleX(1.0675);transform-origin:0 0;">$0.00</span>
<span class="t" style="left:1097.70px;top:535.35px;font-size:14px;line-height:14px;font-weight:400;color:#6d7380;letter-spacing:0.237px;transform:scaleX(1.0762);transform-origin:0 0;">$3,010.47</span>
<span class="t" style="left:1253.08px;top:535.35px;font-size:14px;line-height:14px;font-weight:400;color:#6d7380;letter-spacing:0.238px;transform:scaleX(1.0702);transform-origin:0 0;">$424.04</span>
<span class="t" style="left:1342.48px;top:535.35px;font-size:14px;line-height:14px;font-weight:400;color:#64686e;letter-spacing:0.238px;transform:scaleX(1.0730);transform-origin:0 0;">7 May 2023</span>
<span class="t" style="left:1588.00px;top:535.13px;font-size:14.5px;line-height:14.5px;font-weight:400;color:#2b8bdb;letter-spacing:0.000px;">x</span>
<span class="t" style="left:1599.50px;top:535.13px;font-size:14.5px;line-height:14.5px;font-weight:400;color:#2b8bdb;letter-spacing:0.000px;">2</span>
<span class="t" style="left:1714.70px;top:535.35px;font-size:14px;line-height:14px;font-weight:400;color:#2b8bdb;letter-spacing:-0.011px;transform:scaleX(0.9979);transform-origin:0 0;">745</span>
<span class="t" style="left:524.70px;top:570.53px;font-size:14.5px;line-height:14.5px;font-weight:700;color:#6b7079;letter-spacing:0.268px;transform:scaleX(1.0761);transform-origin:0 0;">532.00</span>
<span class="t" style="left:643.40px;top:570.53px;font-size:14.5px;line-height:14.5px;font-weight:700;color:#6b7079;letter-spacing:0.192px;transform:scaleX(1.0588);transform-origin:0 0;">$27,323.58</span>
<span class="t" style="left:791.60px;top:570.53px;font-size:14.5px;line-height:14.5px;font-weight:700;color:#6b7079;letter-spacing:0.149px;transform:scaleX(1.0452);transform-origin:0 0;">$7,615.00</span>
<span class="t" style="left:977.80px;top:570.53px;font-size:14.5px;line-height:14.5px;font-weight:700;color:#6b7079;letter-spacing:0.365px;transform:scaleX(1.1039);transform-origin:0 0;">$0.00</span>
<span class="t" style="left:1089.00px;top:570.53px;font-size:14.5px;line-height:14.5px;font-weight:700;color:#6b7079;letter-spacing:0.183px;transform:scaleX(1.0559);transform-origin:0 0;">$19,708.58</span>
<span class="t" style="left:1235.90px;top:570.53px;font-size:14.5px;line-height:14.5px;font-weight:700;color:#6b7079;letter-spacing:0.306px;transform:scaleX(1.0973);transform-origin:0 0;">$2,868.99</span>
<span class="t" style="left:860.00px;top:309.95px;font-size:14px;line-height:14px;font-weight:400;color:#6f7277;letter-spacing:0.195px;transform:scaleX(1.0797);transform-origin:0 0;z-index:11">"Hi, I have applied your deduction to this payslip as we previously spoke about."</span>
<span class="t" style="left:15.20px;top:614.45px;font-size:14px;line-height:14px;font-weight:400;color:#7a7f86;letter-spacing:0.139px;transform:scaleX(1.0537);transform-origin:0 0;">Showing 1 to 8 of 8 entries</span>
<span class="t" style="left:1606.42px;top:614.45px;font-size:14px;line-height:14px;font-weight:400;color:#7a7f86;letter-spacing:0.249px;transform:scaleX(1.0841);transform-origin:0 0;">Display</span>
<span class="t" style="left:1671.00px;top:614.45px;font-size:14px;line-height:14px;font-weight:400;color:#2b8bdb;letter-spacing:0.478px;transform:scaleX(1.0760);transform-origin:0 0;">20</span>
<span class="t" style="left:1723.00px;top:614.45px;font-size:14px;line-height:14px;font-weight:400;color:#7a7f86;letter-spacing:0.309px;transform:scaleX(1.0999);transform-origin:0 0;">per page</span>
</body></html>
